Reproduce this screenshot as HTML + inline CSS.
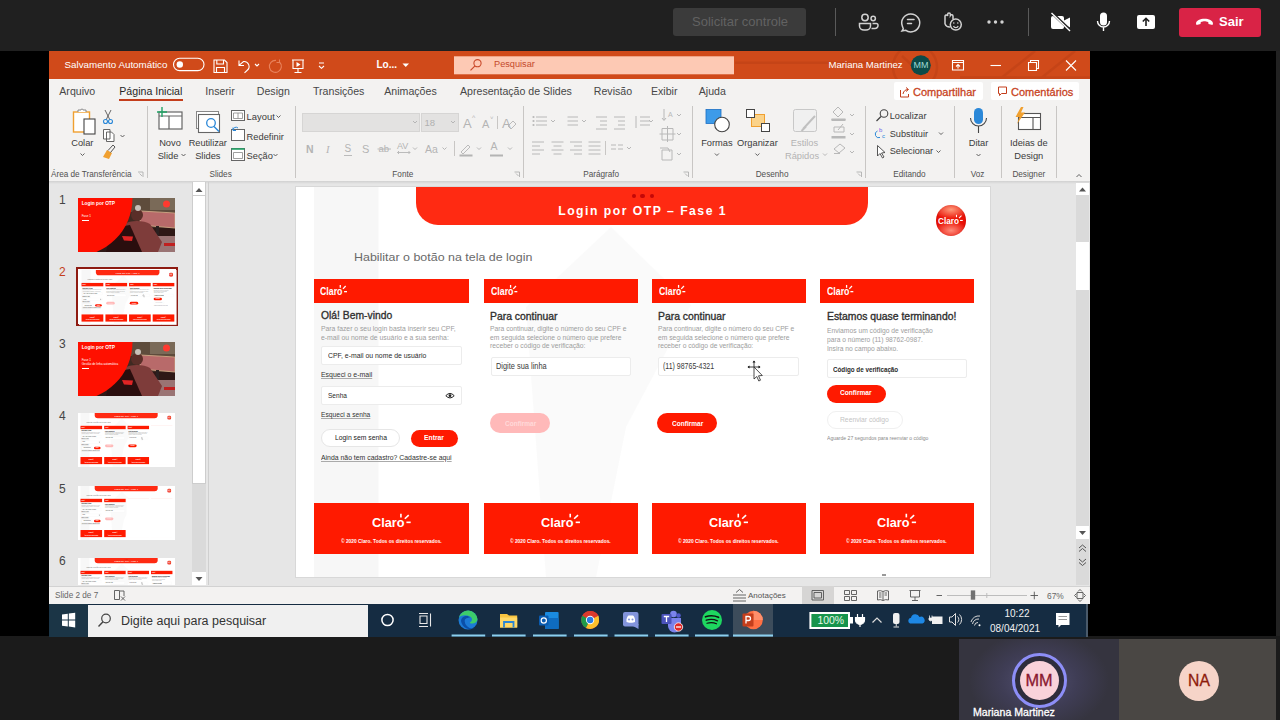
<!DOCTYPE html>
<html><head><meta charset="utf-8">
<style>
*{box-sizing:border-box;margin:0;padding:0}
html,body{width:1280px;height:720px;overflow:hidden;background:#1f1f1f;font-family:"Liberation Sans",sans-serif;position:relative}
.a{position:absolute}
.t{position:absolute;white-space:nowrap;line-height:1}
svg{position:absolute;overflow:visible}
</style></head><body>
<!-- TEAMS TOP BAR -->
<div class="a" style="left:0;top:0;width:1280px;height:51px;background:#202020"></div>
<div class="a" style="left:673px;top:8px;width:133px;height:28px;background:#3b3b3b;border-radius:3px"></div>
<div class="t" style="left:692px;top:15px;font-size:13px;color:#626262">Solicitar controle</div>
<div class="a" style="left:835px;top:8px;width:1px;height:28px;background:#5a5a5a"></div>
<div class="a" style="left:1028px;top:8px;width:1px;height:28px;background:#5a5a5a"></div>
<div class="a" style="left:1179px;top:8px;width:82px;height:29px;background:#d92346;border-radius:3px"></div>
<div class="t" style="left:1219px;top:15px;font-size:13px;font-weight:700;color:#fff">Sair</div>


<svg style="left:0;top:0" width="1280" height="51">
 <g fill="none" stroke="#d2d2d2" stroke-width="1.5">
  <circle cx="865" cy="17.5" r="3.2"/>
  <circle cx="873.2" cy="18.5" r="2.2"/>
  <path d="M859.5 23.5 H870.5 V26 A4.5 4 0 0 1 866 30 H864 A4.5 4 0 0 1 859.5 26 Z"/>
  <path d="M872.5 23.5 H876.5 A1.5 1.5 0 0 1 878 25 V25.5 A3 3 0 0 1 875 28.5 H871.5"/>
  <path d="M903.3 28.8 L902 31 L905.5 30.2 A9 9 0 1 0 902.3 26 Z"/>
  <path d="M907.5 19.5 H914 M907.5 23.5 H911.5" stroke-linecap="round"/>
  <path d="M945 24 V16 A1.4 1.4 0 0 1 947.6 16 V14.5 A1.4 1.4 0 0 1 950.4 14.5 V15.5 A1.4 1.4 0 0 1 953 16 V19.5"/>
  <path d="M945 24 A5 5 0 0 0 950 27"/>
  <circle cx="955.8" cy="24.6" r="5.5"/>
  <path d="M953.5 26 A2.5 2.5 0 0 0 958.2 26" stroke-width="1.2"/>
 </g>
 <g fill="#d2d2d2">
  <circle cx="953.8" cy="23" r="0.8"/><circle cx="957.8" cy="23" r="0.8"/>
  <circle cx="989" cy="22" r="1.7"/><circle cx="995.5" cy="22" r="1.7"/><circle cx="1002" cy="22" r="1.7"/>
 </g>
 <g fill="#fff">
  <rect x="1051" y="16" width="13" height="13" rx="2"/>
  <path d="M1064 20.5 L1070 17.5 V27.5 L1064 24.5 Z"/>
  <rect x="1100" y="12.5" width="7" height="13" rx="3.5"/>
  <rect x="1137" y="15" width="18" height="14" rx="2"/>
 </g>
 <path d="M1051 12 L1071 31" stroke="#202020" stroke-width="3"/>
 <path d="M1051.5 13 L1070 31" stroke="#fff" stroke-width="1.4"/>
 <path d="M1097.5 21 A6 6 0 0 0 1109.5 21 M1103.5 27 V31" stroke="#fff" stroke-width="1.4" fill="none"/>
 <path d="M1146 26 V18.5 M1142.8 21.5 L1146 18.3 L1149.2 21.5" stroke="#202020" stroke-width="1.6" fill="none"/>
 <path d="M1196 23.5 C1196 17 1213 17 1213 23.5 L1212.5 25 L1208.5 24 L1208.2 22 C1205 21 1204 21 1200.8 22 L1200.5 24 L1196.5 25 Z" fill="#fff"/>
</svg>

<!-- BLACK SCREEN AREA -->
<div class="a" style="left:0;top:51px;width:1276px;height:585px;background:#000"></div>
<div class="a" style="left:1276px;top:51px;width:4px;height:585px;background:#222"></div>

<!-- BOTTOM AREA -->
<div class="a" style="left:0;top:636px;width:1280px;height:84px;background:#1b1b1b"></div>

<!-- PPT WINDOW -->
<div class="a" style="left:49px;top:51px;width:1041px;height:28px;background:#d04a1a"></div>
<div class="a" style="left:49px;top:79px;width:1041px;height:102px;background:#f3f2f1"></div>
<div class="a" style="left:49px;top:181px;width:1041px;height:405px;background:#e6e6e6"></div>


<!-- TITLE BAR CONTENT -->
<svg style="left:0;top:0" width="1280" height="80">
 <clipPath id="tbclip"><rect x="49" y="51" width="1041" height="28"/></clipPath>
 <g stroke="#b53d14" stroke-width="2.4" fill="none" opacity="0.4" clip-path="url(#tbclip)">
  <circle cx="915" cy="67" r="22"/>
  <path d="M902 56 L914 67"/>
  <path d="M735 62.7 H890 M1000 79 L1035 51 M1040 79 L1075 51 M960 77.5 H1090"/>
 </g>
 <rect x="173.5" y="58.3" width="30.5" height="12.3" rx="6.15" fill="none" stroke="#fff" stroke-width="1.1"/>
 <circle cx="179.8" cy="64.5" r="3.2" fill="#fff"/>
 <g fill="none" stroke="#fff" stroke-width="1.1">
  <path d="M214 60 H224.5 L227 62.5 V72.5 H214 Z"/>
  <path d="M216.8 60 V64 H223.5 V60 M216.5 72.5 V67.5 H224.5 V72.5"/>
  <path d="M239 60.5 V65.5 H244 M239.3 65.2 L243.5 61.5 A5 5 0 0 1 247 70.5 L244.5 72.8"/>
  <path d="M255 64 L257 66 L259 64"/>
  <path d="M292 60 H304 M293 60.5 V68.5 H303 V60.5 M298 68.5 V72 M294.5 72.5 H301.5"/>
  <path d="M319 63 H324 M319 66 L321.5 68.3 L324 66"/>
 </g>
 <path d="M296.5 62 L300.5 64.5 L296.5 67 Z" fill="#fff"/>
 <path d="M279.5 62 A6 6 0 1 1 276 60.4 M279.5 59.5 V62.5 H276.5" fill="none" stroke="#e8825c" stroke-width="1.1"/>
 <path d="M402.5 63.5 H409 L405.75 67 Z" fill="#fff"/>
 <rect x="454" y="56.3" width="280" height="18" fill="#fdc9b4"/>
 <circle cx="477.5" cy="63.2" r="3.6" fill="none" stroke="#c9492a" stroke-width="1.1"/>
 <path d="M475 65.8 L470.5 70.3" stroke="#c9492a" stroke-width="1.2"/>
 <circle cx="920.8" cy="65.2" r="10" fill="#0c4a48"/>
 <g fill="none" stroke="#fff" stroke-width="1.1">
  <path d="M952.5 60.5 H963.5 V70 H952.5 Z M952.5 62.5 H963.5"/>
  <path d="M958 68.5 V64.5 M956 66.5 L958 64.5 L960 66.5"/>
  <path d="M990.5 65.5 H1001"/>
  <path d="M1028.5 62.5 H1036.5 V70.5 H1028.5 Z M1030.5 62.5 V60.5 H1038.5 V68.5 H1036.5"/>
  <path d="M1066 60.5 L1076 70.5 M1076 60.5 L1066 70.5"/>
 </g>
</svg>
<div class="t" style="left:64.5px;top:60px;font-size:9.8px;color:#fff">Salvamento Automático</div>
<div class="t" style="left:376.5px;top:60px;font-size:10px;font-weight:700;color:#fff">Lo...</div>
<div class="t" style="left:494px;top:60px;font-size:9.2px;color:#c44a2c">Pesquisar</div>
<div class="t" style="left:828.5px;top:60px;font-size:9.6px;color:#fff">Mariana Martinez</div>
<div class="t" style="left:913.5px;top:61px;font-size:9px;color:#9fd9d2">MM</div>


<!-- TABS -->
<div class="t" style="left:59.3px;top:86px;font-size:10.6px;color:#474747">Arquivo</div>
<div class="t" style="left:119.3px;top:86px;font-size:10.6px;color:#262626">Página Inicial</div>
<div class="t" style="left:205.3px;top:86px;font-size:10.6px;color:#474747">Inserir</div>
<div class="t" style="left:256.8px;top:86px;font-size:10.6px;color:#474747">Design</div>
<div class="t" style="left:313px;top:86px;font-size:10.6px;color:#474747">Transições</div>
<div class="t" style="left:384.3px;top:86px;font-size:10.6px;color:#474747">Animações</div>
<div class="t" style="left:460px;top:86px;font-size:10.6px;color:#474747">Apresentação de Slides</div>
<div class="t" style="left:593.8px;top:86px;font-size:10.6px;color:#474747">Revisão</div>
<div class="t" style="left:651px;top:86px;font-size:10.6px;color:#474747">Exibir</div>
<div class="t" style="left:698.8px;top:86px;font-size:10.6px;color:#474747">Ajuda</div>
<div class="a" style="left:119px;top:98.5px;width:64px;height:2.2px;background:#c43e1c"></div>
<div class="a" style="left:894px;top:81.5px;width:89px;height:18.5px;background:#fff;border-radius:2px"></div>
<div class="a" style="left:991px;top:81.5px;width:88px;height:18.5px;background:#fff;border-radius:2px"></div>
<div class="t" style="left:913px;top:87.3px;font-size:11px;color:#c8441f;-webkit-text-stroke:0.3px #c8441f">Compartilhar</div>
<div class="t" style="left:1011px;top:87.3px;font-size:11px;color:#c8441f;-webkit-text-stroke:0.3px #c8441f">Comentários</div>
<svg style="left:0;top:0" width="1280" height="110">
 <g fill="none" stroke="#c43e1c" stroke-width="1">
  <path d="M900.5 90 V97 H908.5 V94 M903 94 C903.5 91 905.5 89.5 908 89.5 M906 87.5 L908.5 89.5 L906 91.5"/>
  <path d="M998.5 87 H1006.5 V93.5 H1001.5 L999.5 95.5 V93.5 H998.5 Z"/>
 </g>
</svg>


<!-- RIBBON -->
<div class="t" style="left:51px;top:171.2px;font-size:8.2px;color:#505050;font-weight:400">Área de Transferência</div>
<div class="t" style="left:120.6px;width:200px;text-align:center;top:171.2px;font-size:8.2px;color:#505050;font-weight:400">Slides</div>
<div class="t" style="left:302.8px;width:200px;text-align:center;top:171.2px;font-size:8.2px;color:#505050;font-weight:400">Fonte</div>
<div class="t" style="left:501.20000000000005px;width:200px;text-align:center;top:171.2px;font-size:8.2px;color:#505050;font-weight:400">Parágrafo</div>
<div class="t" style="left:672.1px;width:200px;text-align:center;top:171.2px;font-size:8.2px;color:#505050;font-weight:400">Desenho</div>
<div class="t" style="left:809.5px;width:200px;text-align:center;top:171.2px;font-size:8.2px;color:#505050;font-weight:400">Editando</div>
<div class="t" style="left:877.5px;width:200px;text-align:center;top:171.2px;font-size:8.2px;color:#505050;font-weight:400">Voz</div>
<div class="t" style="left:928.8px;width:200px;text-align:center;top:171.2px;font-size:8.2px;color:#505050;font-weight:400">Designer</div>
<div class="t" style="left:-17.700000000000003px;width:200px;text-align:center;top:139px;font-size:9.3px;color:#3b3b3b;font-weight:400">Colar</div>
<div class="t" style="left:70px;width:200px;text-align:center;top:139px;font-size:9.3px;color:#3b3b3b;font-weight:400">Novo</div>
<div class="t" style="left:68px;width:200px;text-align:center;top:152.2px;font-size:9.3px;color:#3b3b3b;font-weight:400">Slide</div>
<div class="t" style="left:107.80000000000001px;width:200px;text-align:center;top:139px;font-size:9.2px;color:#3b3b3b;font-weight:400">Reutilizar</div>
<div class="t" style="left:107.80000000000001px;width:200px;text-align:center;top:152.2px;font-size:9.3px;color:#3b3b3b;font-weight:400">Slides</div>
<div class="t" style="left:246.6px;top:112px;font-size:9.4px;color:#3b3b3b;font-weight:400">Layout</div>
<div class="t" style="left:246.6px;top:132.5px;font-size:9.3px;color:#3b3b3b;font-weight:400">Redefinir</div>
<div class="t" style="left:246.6px;top:152px;font-size:9.3px;color:#3b3b3b;font-weight:400">Seção</div>
<div class="t" style="left:616.9px;width:200px;text-align:center;top:139px;font-size:9.3px;color:#3b3b3b;font-weight:400">Formas</div>
<div class="t" style="left:657.4px;width:200px;text-align:center;top:139px;font-size:9.3px;color:#3b3b3b;font-weight:400">Organizar</div>
<div class="t" style="left:704.5px;width:200px;text-align:center;top:139px;font-size:9.3px;color:#b3b3b3;font-weight:400">Estilos</div>
<div class="t" style="left:702px;width:200px;text-align:center;top:152.2px;font-size:9.3px;color:#b3b3b3;font-weight:400">Rápidos</div>
<div class="t" style="left:889.7px;top:111.5px;font-size:9.2px;color:#3b3b3b;font-weight:400">Localizar</div>
<div class="t" style="left:889.7px;top:129.5px;font-size:9.2px;color:#3b3b3b;font-weight:400">Substituir</div>
<div class="t" style="left:889.7px;top:147.2px;font-size:9.2px;color:#3b3b3b;font-weight:400">Selecionar</div>
<div class="t" style="left:878.5px;width:200px;text-align:center;top:139px;font-size:9.3px;color:#3b3b3b;font-weight:400">Ditar</div>
<div class="t" style="left:928.8px;width:200px;text-align:center;top:139px;font-size:9.3px;color:#3b3b3b;font-weight:400">Ideias de</div>
<div class="t" style="left:928.8px;width:200px;text-align:center;top:152.2px;font-size:9.3px;color:#3b3b3b;font-weight:400">Design</div>
<div class="a" style="left:302px;top:113px;width:118px;height:19px;background:#e3e2e1;border:1px solid #d6d5d4"></div>
<div class="a" style="left:421px;top:113px;width:37.5px;height:19px;background:#e3e2e1;border:1px solid #d6d5d4"></div>
<div class="t" style="left:424.5px;top:117.5px;font-size:9.5px;color:#b0b0b0;font-weight:400">18</div>
<svg style="left:0;top:0" width="1280" height="190">
 <g stroke="#c8c6c4" stroke-width="1">
  <path d="M147.5 106 V178 M295.5 106 V178 M523.5 106 V178 M692.5 106 V178 M865.5 106 V178 M954.5 106 V178 M1001.5 106 V178 M1056.5 106 V178"/>
  <path d="M497.5 116 V129 M454.5 141 V156 M605.5 141 V155"/>
 </g>
 <!-- carets -->
 <g fill="none" stroke="#505050" stroke-width="0.9">
  <path d="M80.5 153.5 L82.5 155.5 L84.5 153.5 M120.5 135 L122.5 137 L124.5 135 M181.5 154 L183.5 156 L185.5 154 M276.5 115.5 L278.5 117.5 L280.5 115.5 M273.5 154 L275.5 156 L277.5 154"/>
  <path d="M714.9 153.5 L716.9 155.5 L718.9 153.5 M755.4 153.5 L757.4 155.5 L759.4 153.5 M976.5 154 L978.5 156 L980.5 154 M1076.5 177 L1079 174.5 L1081.5 177"/>
  <path d="M939 132.5 L941 134.5 L943 132.5 M936.5 150.5 L938.5 152.5 L940.5 150.5"/>
 </g>
 <g fill="none" stroke="#b0b0b0" stroke-width="0.9">
  <path d="M413 121 L415 123 L417 121 M451 121 L453 123 L455 121 M413 147.5 L415 149.5 L417 147.5 M442.5 147.5 L444.5 149.5 L446.5 147.5 M477 147.5 L479 149.5 L481 147.5 M508 147.5 L510 149.5 L512 147.5"/>
  <path d="M551 120 L553 122 L555 120 M582 120 L584 122 L586 120 M649 120 L651 122 L653 120 M627 147 L629 149 L631 147 M677 114 L679 116 L681 114 M677 133 L679 135 L681 133 M677 153 L679 155 L681 153"/>
  <path d="M823 153.5 L825 155.5 L827 153.5 M850 114 L852 116 L854 114 M850 133 L852 135 L854 133 M850 151 L852 153 L854 151"/>
  <path d="M138 172 H143 V177 M139.5 173.5 L142 176 M514.5 172 H519.5 V177 M516 173.5 L518.5 176 M683.5 172 H688.5 V177 M685 173.5 L687.5 176 M856.5 172 H861.5 V177 M858 173.5 L860.5 176"/>
 </g>
 <!-- Colar clipboard -->
 <rect x="73.5" y="112" width="16" height="20" fill="#fff" stroke="#f0a030" stroke-width="1.4"/>
 <path d="M78 112 V110 H81 A1 1 0 0 1 83 110 H86 V112" fill="#fff" stroke="#888" stroke-width="1"/>
 <rect x="84" y="119" width="11" height="15" fill="#fff" stroke="#444" stroke-width="1.1"/>
 <!-- scissors -->
 <g fill="none" stroke="#555" stroke-width="0.9"><path d="M105 110 L110 120 M111 110 L106 120"/></g>
 <circle cx="105.5" cy="121.5" r="2" fill="none" stroke="#2b88d8" stroke-width="1.1"/>
 <circle cx="110.5" cy="121.5" r="2" fill="none" stroke="#2b88d8" stroke-width="1.1"/>
 <!-- copy -->
 <path d="M103.5 129.5 H110 V139 H103.5 Z M106.5 132 H111.5 L114 134.5 V141.5 H106.5 Z" fill="#fff" stroke="#555" stroke-width="0.9"/>
 <!-- format painter -->
 <path d="M103 157 L107 150 L112 153 L109 159 Z" fill="#f0a030"/>
 <path d="M108 150.5 L113 145 L115 147 L110.5 152.5" fill="none" stroke="#555" stroke-width="1"/>
 <!-- Novo slide -->
 <rect x="159" y="112" width="23" height="17" fill="#fff" stroke="#666" stroke-width="1.2"/>
 <path d="M159 116 H182 M169 116 V129" stroke="#666" stroke-width="1.2"/>
 <path d="M162 107 V117 M157 112 H167" stroke="#21a366" stroke-width="1.4"/>
 <!-- Reutilizar -->
 <rect x="196.5" y="111.5" width="22" height="17" fill="#fff" stroke="#888" stroke-width="1"/>
 <rect x="198.5" y="114.5" width="21" height="18" fill="#fff" stroke="#666" stroke-width="1.1"/>
 <circle cx="211" cy="123" r="4.3" fill="#fff" stroke="#2b88d8" stroke-width="1.3"/>
 <path d="M214 126.5 L219 131.5" stroke="#2b88d8" stroke-width="1.4"/>
 <!-- Layout/Redefinir/Secao -->
 <rect x="231.5" y="110.5" width="13" height="10" fill="#fff" stroke="#666" stroke-width="1"/>
 <path d="M233.5 113 H242.5 V118.5 H233.5 Z M238 113 V118.5" fill="none" stroke="#888" stroke-width="0.8"/>
 <rect x="231.5" y="129.5" width="13" height="11" fill="#fff" stroke="#666" stroke-width="1"/>
 <path d="M233 130 A3 3 0 0 1 238 128 M233 127.5 V130.5 H236" fill="none" stroke="#2b88d8" stroke-width="1"/>
 <rect x="231.5" y="148.5" width="13" height="12" fill="#fff" stroke="#666" stroke-width="1"/>
 <path d="M231.5 149 H244.5" stroke="#21a366" stroke-width="1.6"/>
 <path d="M233.5 152.5 H242.5 V158.5 H233.5 Z" fill="none" stroke="#888" stroke-width="0.8"/>
 <!-- Fonte row -->
 <g fill="#b4b4b4" font-family="Liberation Sans" >
  <text x="463" y="128" font-size="13">A</text><text x="472" y="120" font-size="7">^</text>
  <text x="482" y="128" font-size="11">A</text><text x="490" y="120" font-size="6">˅</text>
  <text x="502" y="128" font-size="13">A</text>
  <text x="306" y="153" font-size="10.5" font-weight="700">N</text>
  <text x="326" y="153" font-size="10.5" font-style="italic" font-family="Liberation Serif">I</text>
  <text x="344.5" y="152" font-size="10">S</text>
  <text x="362" y="153" font-size="11">S</text>
  <text x="378.5" y="152" font-size="9.5">ab</text>
  <text x="397" y="149" font-size="9">AV</text>
  <text x="425" y="153" font-size="10.5">Aa</text>
  <text x="490.5" y="150" font-size="10.5">A</text>
 </g>
 <g fill="none" stroke="#b4b4b4" stroke-width="0.9">
  <path d="M344 155.5 H352 M377.5 149 H391 M397.5 152.5 H410 M399 151 L397.5 152.5 L399 154 M408.5 151 L410 152.5 L408.5 154"/>
  <path d="M508 126 L513 121 L516 124 L511 129 Z"/>
  <path d="M461 152 L468 145 L470 147 L463 154 Z"/>
 </g>
 <rect x="459.5" y="154.5" width="13" height="2" fill="#b4b4b4"/>
 <rect x="490" y="154.5" width="13" height="2" fill="#b4b4b4"/>
 <!-- paragraph -->
 <g fill="none" stroke="#b8b8b8" stroke-width="1">
  <path d="M536 117 H547 M536 121 H547 M536 125 H547 M567.5 117 H578 M567.5 121 H578 M567.5 125 H578"/>
  <path d="M596 117 H607 M600 121 H607 M600 125 H607 M596 129 H607 M614 117 H625 M618 121 H625 M618 125 H625 M614 129 H625"/>
  <path d="M640 117 H650 M640 121 H650 M640 125 H650 M636 116 V128"/>
  <path d="M532 142 H544 M532 146 H540 M532 150 H544 M532 154 H540"/>
  <path d="M551.5 142 H563.5 M553.5 146 H561.5 M551.5 150 H563.5 M553.5 154 H561.5"/>
  <path d="M570 142 H582 M574 146 H582 M570 150 H582 M574 154 H582"/>
  <path d="M588.5 142 H600.5 M588.5 146 H600.5 M588.5 150 H600.5 M588.5 154 H600.5"/>
  <path d="M611 145 H616 M618 145 H623 M611 149 H616 M618 149 H623"/>
  <path d="M664 109 V120 M662 118 L664 120.5 L666 118 M662 128.5 H673 V140 H662 Z M667.5 126 V142 M659.5 134 H675.5"/>
  <path d="M662 150 H672 V160 H662 Z M660 148 H668 L670 152"/>
 </g>
 <g fill="#b8b8b8"><circle cx="533.5" cy="117" r="1.1"/><circle cx="533.5" cy="121" r="1.1"/><circle cx="533.5" cy="125" r="1.1"/></g>
 <text x="668" y="117" font-size="7" fill="#b8b8b8" font-family="Liberation Sans">A</text>
 <!-- Formas -->
 <rect x="706" y="109.5" width="15" height="14" fill="#3d9be9" stroke="#1b6fc4" stroke-width="0.8"/>
 <circle cx="722" cy="124.5" r="7.3" fill="#fff" stroke="#444" stroke-width="1.1"/>
 <!-- Organizar -->
 <rect x="751.5" y="114.5" width="13" height="12" fill="#fbd38a" stroke="#f0a030" stroke-width="1"/>
 <rect x="746.5" y="109.5" width="8" height="8" fill="#fff" stroke="#444" stroke-width="1"/>
 <rect x="761.5" y="123.5" width="8" height="8" fill="#fff" stroke="#444" stroke-width="1"/>
 <!-- Estilos rapidos -->
 <rect x="793.5" y="109.5" width="23" height="22" rx="2" fill="#f0f0f0" stroke="#c8c8c8" stroke-width="1"/>
 <path d="M803 129 L815 116 M801.5 131 L806 126.5" stroke="#c0c0c0" stroke-width="2"/>
 <!-- right small -->
 <g fill="none" stroke="#b8b8b8" stroke-width="1">
  <path d="M833 112 L838 107 L843 112 L838 117 Z M831.5 119.5 H845.5 M834 127 H844 V132 H834 Z M838 130 L843 124 M834 149 L840 144 L845 148 L839 153 Z M834 153.5 H840"/>
 </g>
 <rect x="831.5" y="118.5" width="14" height="2.5" fill="#b8b8b8"/>
 <rect x="831.5" y="136" width="14" height="2.5" fill="#b8b8b8"/>
 <!-- Editando icons -->
 <circle cx="884" cy="113.5" r="3.8" fill="none" stroke="#444" stroke-width="1.1"/>
 <path d="M881 116.5 L876.5 121" stroke="#444" stroke-width="1.3"/>
 <text x="879" y="132" font-size="6" fill="#7160e8" font-family="Liberation Sans">b</text>
 <text x="882" y="138" font-size="6" fill="#2b88d8" font-family="Liberation Sans">c</text>
 <path d="M877.5 131 A3 3 0 0 0 880 137.5" fill="none" stroke="#2b88d8" stroke-width="1"/>
 <path d="M877.5 145.5 L877.5 156 L880 153.5 L882.5 158 L884 157 L881.5 153 L885 152.5 Z" fill="#fff" stroke="#444" stroke-width="0.9"/>
 <!-- Ditar -->
 <rect x="974" y="108" width="9" height="16" rx="4.5" fill="#2b88d8"/>
 <path d="M970.5 118 A8 8 0 0 0 986.5 118 M978.5 126 V133" fill="none" stroke="#444" stroke-width="1.1"/>
 <!-- Designer -->
 <rect x="1018.5" y="113.5" width="22" height="16" fill="#fff" stroke="#555" stroke-width="1.1"/>
 <path d="M1018.5 117.5 H1040.5 M1033 117.5 V129.5" stroke="#555" stroke-width="1.1"/>
 <path d="M1021 107 L1015.5 117 H1019.5 L1017 124 L1025 112.5 H1021 L1023.5 107 Z" fill="#f0a030"/>
</svg>


<!-- STATUS BAR -->
<div class="a" style="left:49px;top:586px;width:1041px;height:18px;background:#f3f2f1;border-top:1px solid #d2d2d2"></div>
<div class="t" style="left:55px;top:591.5px;font-size:8.2px;color:#666">Slide 2 de 7</div>
<div class="t" style="left:748px;top:591.5px;font-size:8px;color:#555">Anotações</div>
<div class="a" style="left:801.5px;top:586px;width:32px;height:18px;background:#d6d5d4"></div>
<div class="t" style="left:1047px;top:591.5px;font-size:8.4px;color:#666">67%</div>
<svg style="left:0;top:0" width="1280" height="720">
 <g fill="none" stroke="#555" stroke-width="0.9">
  <path d="M114.5 590.5 H119.5 V599.5 H114.5 Z M120 591 H124 V596 M121 596.5 L125 600.5 M125 596.5 L121 600.5"/>
  <path d="M736 592.5 L739.5 589.5 L743 592.5 M733 595 H746 M733 598 H746 M733 601 H746"/>
  <path d="M812 590.5 H823.5 V600 H812 Z M814 592.5 H821.5 V598 H814 Z"/>
  <path d="M844.5 590.5 H849.5 V594.5 H844.5 Z M851.5 590.5 H856.5 V594.5 H851.5 Z M844.5 596.5 H849.5 V600.5 H844.5 Z M851.5 596.5 H856.5 V600.5 H851.5 Z"/>
  <path d="M877.5 591 Q880.5 590 883 591.5 Q885.5 590 888.5 591 V600 Q885.5 599 883 600.5 Q880.5 599 877.5 600 Z M883 591.5 V600.5 M879 593 H881.5 M879 595 H881.5 M879 597 H881.5 M884.5 593 H887 M884.5 595 H887"/>
  <path d="M909.5 590.5 H920.5 M910.5 591 V597 H919.5 V591 M915 597 V600.5 M912 600.5 H918"/>
  <path d="M936.5 595.5 H942"/>
  <path d="M1030.5 595.5 H1038 M1034.3 591.7 V599.3"/>
  <path d="M1080 589.5 L1082 591.5 M1080 589.5 L1078 591.5 M1080 601.5 L1082 599.5 M1080 601.5 L1078 599.5 M1074.5 595.5 L1076.5 593.5 M1074.5 595.5 L1076.5 597.5 M1085.5 595.5 L1083.5 593.5 M1085.5 595.5 L1083.5 597.5 M1077 592.5 H1083 V598.5 H1077 Z"/>
 </g>
 <path d="M947 595.5 H1027" stroke="#bdbdbd" stroke-width="1"/>
 <path d="M986.8 593 V598" stroke="#bdbdbd" stroke-width="1"/>
 <rect x="970.8" y="590.4" width="4.4" height="9.3" fill="#707070"/>
</svg>

<!-- TASKBAR -->
<div class="a" style="left:49px;top:604px;width:1039px;height:32.5px;background:#152c42"></div>
<div class="a" style="left:49px;top:604px;width:39px;height:32.5px;background:#1b3546"></div>
<div class="a" style="left:88px;top:604.8px;width:280px;height:31.8px;background:#f0f0f0"></div>
<div class="t" style="left:121px;top:614.5px;font-size:12.5px;color:#333">Digite aqui para pesquisar</div>
<div class="a" style="left:733px;top:604px;width:40px;height:32.5px;background:#3c4c5b"></div>
<div class="a" style="left:1086px;top:604px;width:1.5px;height:32.5px;background:#4a5a6a"></div>
<div class="t" style="left:1004.5px;top:608.5px;font-size:10px;color:#f2f2f2">10:22</div>
<div class="t" style="left:990px;top:623.5px;font-size:10px;color:#f2f2f2">08/04/2021</div>
<svg style="left:0;top:0" width="1280" height="720">
 <!-- underlines -->
 <g fill="#8ccfee">
  <rect x="451.6" y="634.5" width="33.6" height="2"/><rect x="492" y="634.5" width="33.6" height="2"/><rect x="533" y="634.5" width="33.6" height="2"/>
  <rect x="574" y="634.5" width="33.6" height="2"/><rect x="614.5" y="634.5" width="33.6" height="2"/><rect x="655" y="634.5" width="33.6" height="2"/>
  <rect x="695" y="634.5" width="33.6" height="2"/><rect x="733" y="634.5" width="40" height="2"/>
 </g>
 <!-- windows logo -->
 <path d="M62 614.5 L67.8 613.7 V619.6 H62 Z M68.8 613.5 L75.2 612.8 V619.6 H68.8 Z M62 620.6 H67.8 V626.5 L62 625.7 Z M68.8 620.6 H75.2 V627.4 L68.8 626.6 Z" fill="#fff"/>
 <!-- search -->
 <circle cx="106" cy="618.5" r="4.3" fill="none" stroke="#444" stroke-width="1.2"/>
 <path d="M103 621.8 L98.5 626.5" stroke="#444" stroke-width="1.4"/>
 <!-- cortana -->
 <circle cx="387.5" cy="620" r="5.6" fill="none" stroke="#fff" stroke-width="1.5"/>
 <!-- task view -->
 <g fill="none" stroke="#e8e8e8" stroke-width="1.1"><path d="M419 613.5 H428 M420 616 H427 V623.5 H420 Z M419 626.5 H428 M430.5 613.5 V626.5"/></g>
 <!-- edge -->
 <circle cx="468" cy="620" r="9.5" fill="#1c7ad6"/>
 <path d="M458.8 618 A9.5 9.5 0 0 1 477.5 619 C477 624 471 624.5 469 622.5 C472 622 473.5 618.5 470 616.5 C465 614 459.5 616 458.8 618 Z" fill="#3dcc6a"/>
 <path d="M461 621 C461 616 468 614.5 470 617.5 C466 617 463.5 621 466 625 C468.5 628.5 472.5 629 475 628 A9.5 9.5 0 0 1 461 621 Z" fill="#0b4fa8"/>
 <circle cx="467.5" cy="621" r="2.8" fill="#1c7ad6"/>
 <!-- explorer -->
 <path d="M500 614 H507 L509 615.5 H517.2 V627.5 H500 Z" fill="#f8c440"/>
 <rect x="500" y="617.5" width="17.2" height="10" fill="#ffd866"/>
 <path d="M504 627.5 V622 H513.5 V627.5" fill="none" stroke="#2a86d6" stroke-width="1.8"/>
 <!-- outlook -->
 <rect x="545" y="612" width="13.6" height="17" rx="1" fill="#1a8be0"/>
 <path d="M545 618 L558.6 618 V629 H545 Z" fill="#0f6cc0"/>
 <rect x="539" y="615.5" width="9.5" height="10" rx="1" fill="#0a5bb0"/>
 <circle cx="543.8" cy="620.5" r="2.6" fill="none" stroke="#fff" stroke-width="1.2"/>
 <!-- chrome -->
 <circle cx="590.1" cy="620" r="9" fill="#db3a2c"/>
 <path d="M590.1 620 L582.3 615.5 A9 9 0 0 0 586 628 Z" fill="#1f9a4a"/>
 <path d="M590.1 620 L586 628 A9 9 0 0 0 599 619 L598.5 615.5 Z" fill="#fbc02d"/>
 <path d="M590.1 611 A9 9 0 0 0 582.3 615.5 L590.1 620 L598.4 615.5 A9 9 0 0 0 590.1 611 Z" fill="#db3a2c"/>
 <circle cx="590.1" cy="620" r="4.2" fill="#fff"/>
 <circle cx="590.1" cy="620" r="3.2" fill="#2a7de1"/>
 <!-- discord -->
 <rect x="623" y="612" width="15.5" height="14.5" rx="2" fill="#8294dc"/>
 <path d="M633 626 L638.5 629 V624 Z" fill="#8294dc"/>
 <path d="M626.5 622 C626 618.5 627.5 616 628.5 615.5 H633 C634 616 635.5 618.5 635 622 C633.5 623 628 623 626.5 622 Z" fill="#fff"/>
 <circle cx="629" cy="619.5" r="1" fill="#8294dc"/><circle cx="632.5" cy="619.5" r="1" fill="#8294dc"/>
 <!-- teams -->
 <circle cx="673.5" cy="614" r="3.3" fill="#7b83eb"/>
 <circle cx="678.5" cy="615.5" r="2.3" fill="#5059c9"/>
 <path d="M668 618 H681 V626 A5 5 0 0 1 668 626 Z" fill="#7b83eb"/>
 <rect x="661.5" y="614" width="10" height="10" rx="1" fill="#4b53bc"/>
 <path d="M663.8 616.5 H669.2 M666.5 616.5 V622" stroke="#fff" stroke-width="1.3"/>
 <circle cx="678.5" cy="627" r="4.2" fill="#e02a2a" stroke="#fff" stroke-width="0.8"/>
 <path d="M676 627 H681" stroke="#fff" stroke-width="1.3"/>
 <!-- spotify -->
 <circle cx="712" cy="620" r="10" fill="#1ed760"/>
 <g fill="none" stroke="#111" stroke-linecap="round"><path d="M705.5 616.8 Q712 614.5 718.5 617.3" stroke-width="1.7"/><path d="M706.3 620.2 Q712 618.3 717.5 620.8" stroke-width="1.4"/><path d="M707 623.3 Q712 621.8 716.5 623.8" stroke-width="1.2"/></g>
 <!-- powerpoint -->
 <circle cx="753.5" cy="620" r="9.3" fill="#ff7043"/>
 <path d="M753.5 610.7 A9.3 9.3 0 0 1 762.8 620 H753.5 Z" fill="#ff8f6b"/>
 <rect x="742.5" y="613.5" width="11" height="13" rx="1" fill="#c43e1c"/>
 <path d="M746 623.5 V616.5 H748.5 A2 2 0 0 1 748.5 620.5 H746" fill="none" stroke="#fff" stroke-width="1.3"/>
 <!-- battery -->
 <rect x="810.4" y="613" width="38.6" height="15" fill="#17944c" stroke="#fff" stroke-width="2"/>
 <rect x="850" y="617" width="3" height="6.5" fill="#fff"/>
 <!-- plug -->
 <path d="M857.5 614 V617.5 M862.5 614 V617.5 M855.5 617.5 H864.5 V620 A4.5 4.5 0 0 1 855.5 620 Z M860 624 V627" fill="#fff" stroke="#fff" stroke-width="1.2"/>
 <!-- caret -->
 <path d="M872.5 622.5 L877 618 L881.5 622.5" fill="none" stroke="#ddd" stroke-width="1.2"/>
 <!-- device -->
 <rect x="893" y="613" width="6.5" height="11" rx="2" fill="#f0f0f0"/>
 <path d="M896.25 624 V626.5 M893.5 627 H899" stroke="#ddd" stroke-width="1"/>
 <!-- onedrive -->
 <path d="M910 623.5 A3 3 0 0 1 911 617.8 A4.5 4.5 0 0 1 919.5 617 A3.3 3.3 0 0 1 922.5 623.5 Z" fill="#1e88e5"/>
 <!-- battery plug -->
 <rect x="932" y="616.5" width="10.5" height="7.5" fill="#f0f0f0"/>
 <path d="M929.5 615.5 V618 M932 615.5 V618 M929 618 H932.5 V620 L930.8 621 L929 620 Z" fill="#f0f0f0" stroke="#f0f0f0" stroke-width="0.8"/>
 <!-- speaker -->
 <g fill="none" stroke="#e0e0e0" stroke-width="1"><path d="M949.5 617 H952 L955.5 613.5 V625.5 L952 622 H949.5 Z M957.5 616.5 A4 4 0 0 1 957.5 622.5 M959.5 614.5 A7 7 0 0 1 959.5 624.5"/></g>
 <!-- wifi -->
 <g fill="none" stroke="#d8d8d8" stroke-width="1"><path d="M971 622 A8 8 0 0 1 980 616 M972.5 624 A6 6 0 0 1 979 619 M974.5 625.5 A3.5 3.5 0 0 1 978 622.5"/></g>
 <circle cx="979.5" cy="625.3" r="1" fill="#fff"/>
 <!-- notification -->
 <path d="M1056 613 H1069.5 V625 H1061 L1058.5 627.5 V625 H1056 Z" fill="#fff"/>
 <path d="M1058.5 616.5 H1067 M1058.5 619.5 H1067" stroke="#999" stroke-width="1"/>
</svg>
<div class="t" style="left:817.5px;top:615.5px;font-size:10.4px;color:#e8f8e8">100%</div>

<!-- PARTICIPANTS -->
<div class="a" style="left:959px;top:639px;width:160px;height:81px;background:radial-gradient(ellipse 70px 50px at 80px 42px,#525073 0%,#3f3d55 55%,#35343f 100%)"></div>
<div class="a" style="left:1119px;top:639px;width:157px;height:81px;background:#4a4744"></div>
<div class="a" style="left:1011.5px;top:653.1px;width:55px;height:55px;border-radius:50%;border:3px solid #8d8ef7;background:#2e2d3c"></div>
<div class="a" style="left:1019.5px;top:661.1px;width:39px;height:39px;border-radius:50%;background:#f9d2da;color:#8a1830;font-size:16.3px;text-align:center;line-height:39px;-webkit-text-stroke:0.3px #8a1830">MM</div>
<div class="a" style="left:1179px;top:660.6px;width:40px;height:40px;border-radius:50%;background:#f6d4c8;color:#8e1b0b;font-size:15.7px;text-align:center;line-height:40px;-webkit-text-stroke:0.3px #8e1b0b">NA</div>
<div class="t" style="left:973px;top:706.5px;font-size:10.6px;color:#fff;-webkit-text-stroke:0.3px #fff">Mariana Martinez</div>

<div class="a" style="left:49px;top:181px;width:1041px;height:3px;background:linear-gradient(#d0d0d0,#e6e6e6)"></div>
<div class="a" style="left:208px;top:182px;width:1px;height:403px;background:#cfcfcf"></div>
<div class="a" style="left:192px;top:182px;width:14px;height:302px;background:#fff;border:1px solid #cdcdcd;border-top:none"></div>
<div class="a" style="left:192px;top:195px;width:14px;height:1px;background:#cdcdcd"></div>
<div class="a" style="left:192px;top:484px;width:14px;height:88px;background:#dadada"></div>
<div class="a" style="left:192px;top:572px;width:14px;height:13px;background:#fff"></div>
<div class="a" style="left:1076px;top:182px;width:13px;height:403px;background:#dadada"></div>
<div class="a" style="left:1076px;top:183px;width:13px;height:12px;background:#fff"></div>
<div class="a" style="left:1076px;top:242px;width:13px;height:48px;background:#fff"></div>
<div class="a" style="left:1076px;top:526px;width:13px;height:13px;background:#fff"></div>
<svg style="left:0;top:0" width="1280" height="720">
 <path d="M195.5 192 L199 188 L202.5 192 Z M195.5 577 L199 581 L202.5 577 Z M1079 191.5 L1082.5 187.5 L1086 191.5 Z M1079 531 L1082.5 535 L1086 531 Z" fill="#555"/>
 <path d="M1079 548 L1082.5 545 L1086 548 M1079 551.5 L1082.5 548.5 L1086 551.5 M1079 559 L1082.5 562 L1086 559 M1079 562.5 L1082.5 565.5 L1086 562.5" fill="none" stroke="#555" stroke-width="1"/>
</svg>
<div class="t" style="left:59px;top:194px;font-size:12px;color:#444">1</div>
<div class="t" style="left:59px;top:266px;font-size:12px;color:#c43e1c">2</div>
<div class="t" style="left:59px;top:338px;font-size:12px;color:#444">3</div>
<div class="t" style="left:59px;top:410px;font-size:12px;color:#444">4</div>
<div class="t" style="left:59px;top:483px;font-size:12px;color:#444">5</div>
<div class="t" style="left:59px;top:555px;font-size:12px;color:#444">6</div>
<div class="a" style="left:295px;top:186px;width:696px;height:392px;background:#d8d8d8"></div>
<div class="a" style="left:296px;top:187px;width:694px;height:390px;background:#fff;overflow:hidden">
<svg style="left:0;top:0" width="694" height="390"><g fill="#f5f5f5"><path d="M18 0 H82.5 V390 H18 Z" opacity="0.8"/><path d="M315 40 L395 118 L330 240 L300 390 L250 390 L230 120 Z" opacity="0.5"/></g></svg>
<div class="a" style="left:120.40px;top:0.00px;width:451.60px;height:37.50px;background:#ff2a12;border-radius:0 0 22px 22px"></div>
<div class="a" style="left:335.70px;top:6.70px;width:4.40px;height:4.40px;background:#c40808;border-radius:50%"></div>
<div class="a" style="left:344.40px;top:6.70px;width:4.40px;height:4.40px;background:#c40808;border-radius:50%"></div>
<div class="a" style="left:353.50px;top:6.70px;width:4.40px;height:4.40px;background:#c40808;border-radius:50%"></div>
<div class="t" style="left:262.20px;top:18.17px;font-size:12.209px;color:#fff;font-weight:700;letter-spacing:1.5px">Login por OTP – Fase 1</div>
<div class="a" style="left:640.00px;top:18.00px;width:30.20px;height:30.60px;border-radius:50%;background:radial-gradient(ellipse 60% 30% at 50% 15%, #ff9a7a 0%, rgba(255,80,50,0) 100%),radial-gradient(ellipse 55% 30% at 50% 82%, #ff8c7a 0%, rgba(255,60,40,0) 100%),radial-gradient(circle at 50% 50%, #f01808 0%, #e81006 60%, #c00600 90%, #a00 100%)"></div>
<div class="t" style="left:641.80px;top:29.63px;font-size:8.642px;color:#fff;font-weight:700;transform:scaleX(0.9506);transform-origin:0 0;">Claro</div>
<svg style="left:0;top:0" width="1" height="1"><g stroke="#fff" stroke-width="1.07" stroke-linecap="butt"><path d="M660.49 27.81 V30.20"/><path d="M663.01 31.08 L665.53 28.69"/><path d="M664.02 33.44 H666.79"/></g></svg>
<div class="t" style="left:57.60px;top:64.31px;font-size:11.797px;color:#6a6a6a;font-weight:400;transform:scaleX(1.0555);transform-origin:0 0;">Habilitar o botão na tela de login</div>
<div class="a" style="left:17.70px;top:91.70px;width:155.50px;height:24.80px;background:#ff1a00"></div>
<div class="t" style="left:24.25px;top:100.06px;font-size:10.288px;color:#fff;font-weight:700;transform:scaleX(0.8556);transform-origin:0 0;">Claro</div>
<svg style="left:0;top:0" width="1" height="1"><g stroke="#fff" stroke-width="1.28" stroke-linecap="butt"><path d="M44.27 97.95 V100.80"/><path d="M46.98 101.85 L49.67 99.00"/><path d="M48.05 104.66 H51.02"/></g></svg>
<div class="a" style="left:17.70px;top:315.80px;width:155.50px;height:50.90px;background:#ff1a00"></div>
<div class="t" style="left:76.00px;top:329.37px;font-size:13.169px;color:#fff;font-weight:700;transform:scaleX(0.9655);transform-origin:0 0;">Claro</div>
<svg style="left:0;top:0" width="1" height="1"><g stroke="#fff" stroke-width="1.63" stroke-linecap="butt"><path d="M104.92 326.75 V330.40"/><path d="M108.83 331.74 L112.72 328.10"/><path d="M110.39 335.34 H114.67"/></g></svg>
<div class="t" style="left:44.95px;top:352.50px;font-size:4.938px;color:#fff;font-weight:700;transform:scaleX(0.9842);transform-origin:0 0;">© 2020 Claro. Todos os direitos reservados.</div>
<div class="a" style="left:188.00px;top:91.70px;width:153.50px;height:24.80px;background:#ff1a00"></div>
<div class="t" style="left:194.55px;top:100.06px;font-size:10.288px;color:#fff;font-weight:700;transform:scaleX(0.8556);transform-origin:0 0;">Claro</div>
<svg style="left:0;top:0" width="1" height="1"><g stroke="#fff" stroke-width="1.28" stroke-linecap="butt"><path d="M214.58 97.95 V100.80"/><path d="M217.28 101.85 L219.98 99.00"/><path d="M218.36 104.66 H221.33"/></g></svg>
<div class="a" style="left:188.00px;top:315.80px;width:153.50px;height:50.90px;background:#ff1a00"></div>
<div class="t" style="left:245.30px;top:329.37px;font-size:13.169px;color:#fff;font-weight:700;transform:scaleX(0.9655);transform-origin:0 0;">Claro</div>
<svg style="left:0;top:0" width="1" height="1"><g stroke="#fff" stroke-width="1.63" stroke-linecap="butt"><path d="M274.22 326.75 V330.40"/><path d="M278.12 331.74 L282.02 328.10"/><path d="M279.68 335.34 H283.97"/></g></svg>
<div class="t" style="left:214.25px;top:352.50px;font-size:4.938px;color:#fff;font-weight:700;transform:scaleX(0.9842);transform-origin:0 0;">© 2020 Claro. Todos os direitos reservados.</div>
<div class="a" style="left:356.00px;top:91.70px;width:153.60px;height:24.80px;background:#ff1a00"></div>
<div class="t" style="left:362.55px;top:100.06px;font-size:10.288px;color:#fff;font-weight:700;transform:scaleX(0.8556);transform-origin:0 0;">Claro</div>
<svg style="left:0;top:0" width="1" height="1"><g stroke="#fff" stroke-width="1.28" stroke-linecap="butt"><path d="M382.57 97.95 V100.80"/><path d="M385.27 101.85 L387.97 99.00"/><path d="M386.35 104.66 H389.32"/></g></svg>
<div class="a" style="left:356.00px;top:315.80px;width:153.60px;height:50.90px;background:#ff1a00"></div>
<div class="t" style="left:413.35px;top:329.37px;font-size:13.169px;color:#fff;font-weight:700;transform:scaleX(0.9655);transform-origin:0 0;">Claro</div>
<svg style="left:0;top:0" width="1" height="1"><g stroke="#fff" stroke-width="1.63" stroke-linecap="butt"><path d="M442.27 326.75 V330.40"/><path d="M446.17 331.74 L450.07 328.10"/><path d="M447.73 335.34 H452.02"/></g></svg>
<div class="t" style="left:382.30px;top:352.50px;font-size:4.938px;color:#fff;font-weight:700;transform:scaleX(0.9842);transform-origin:0 0;">© 2020 Claro. Todos os direitos reservados.</div>
<div class="a" style="left:524.00px;top:91.70px;width:153.70px;height:24.80px;background:#ff1a00"></div>
<div class="t" style="left:530.55px;top:100.06px;font-size:10.288px;color:#fff;font-weight:700;transform:scaleX(0.8556);transform-origin:0 0;">Claro</div>
<svg style="left:0;top:0" width="1" height="1"><g stroke="#fff" stroke-width="1.28" stroke-linecap="butt"><path d="M550.57 97.95 V100.80"/><path d="M553.27 101.85 L555.97 99.00"/><path d="M554.35 104.66 H557.32"/></g></svg>
<div class="a" style="left:524.00px;top:315.80px;width:153.70px;height:50.90px;background:#ff1a00"></div>
<div class="t" style="left:581.40px;top:329.37px;font-size:13.169px;color:#fff;font-weight:700;transform:scaleX(0.9655);transform-origin:0 0;">Claro</div>
<svg style="left:0;top:0" width="1" height="1"><g stroke="#fff" stroke-width="1.63" stroke-linecap="butt"><path d="M610.32 326.75 V330.40"/><path d="M614.23 331.74 L618.12 328.10"/><path d="M615.78 335.34 H620.07"/></g></svg>
<div class="t" style="left:550.35px;top:352.50px;font-size:4.938px;color:#fff;font-weight:700;transform:scaleX(0.9842);transform-origin:0 0;">© 2020 Claro. Todos os direitos reservados.</div>
<div class="t" style="left:24.70px;top:123.32px;font-size:10.700px;color:#2e2e2e;font-weight:400;transform:scaleX(0.9669);transform-origin:0 0;-webkit-text-stroke:0.32px #2e2e2e;">Olá! Bem-vindo</div>
<div class="t" style="left:24.70px;top:138.83px;font-size:6.584px;color:#9d9d9d;font-weight:400;transform:scaleX(1.0346);transform-origin:0 0;">Para fazer o seu login basta inserir seu CPF,</div>
<div class="t" style="left:24.70px;top:147.53px;font-size:6.584px;color:#9d9d9d;font-weight:400;transform:scaleX(1.04);transform-origin:0 0;">e-mail ou nome de usuário e a sua senha:</div>
<div class="a" style="left:24.50px;top:159.40px;width:141.20px;height:18.80px;background:#fff;border:1px solid #ececec;border-radius:2px"></div>
<div class="t" style="left:31.70px;top:166.36px;font-size:6.859px;color:#2a2a2a;font-weight:400;transform:scaleX(1.0054);transform-origin:0 0;">CPF, e-mail ou nome de usuário</div>
<div class="t" style="left:24.70px;top:185.25px;font-size:6.447px;color:#333;font-weight:400;transform:scaleX(1.0764);transform-origin:0 0;text-decoration:underline;text-decoration-color:#aaa;text-underline-offset:1px">Esqueci o e-mail</div>
<div class="a" style="left:24.50px;top:199.30px;width:141.20px;height:18.90px;background:#fff;border:1px solid #ececec;border-radius:2px"></div>
<div class="t" style="left:31.70px;top:206.01px;font-size:6.859px;color:#2a2a2a;font-weight:400;transform:scaleX(0.9580);transform-origin:0 0;">Senha</div>
<svg style="left:0;top:0" width="1" height="1"><path d="M149.8 208.7 Q154.0 204.2 158.2 208.7 Q154.0 213.2 149.8 208.7 Z" fill="none" stroke="#222" stroke-width="1"/><circle cx="154.0" cy="208.7" r="1.4" fill="#222"/></svg>
<div class="t" style="left:24.70px;top:224.95px;font-size:6.447px;color:#333;font-weight:400;transform:scaleX(1.0363);transform-origin:0 0;text-decoration:underline;text-decoration-color:#aaa;text-underline-offset:1px">Esqueci a senha</div>
<div class="a" style="left:24.50px;top:242.30px;width:79.90px;height:18.10px;background:#fff;border:1px solid #e6e6e6;border-radius:10px"></div>
<div class="t" style="left:38.75px;top:248.15px;font-size:6.447px;color:#222;font-weight:400;transform:scaleX(1.0590);transform-origin:0 0;">Login sem senha</div>
<div class="a" style="left:115.20px;top:242.50px;width:47.00px;height:17.90px;background:#ff1a00;border-radius:10px"></div>
<div class="t" style="left:128.40px;top:248.15px;font-size:6.447px;color:#fff;font-weight:700;transform:scaleX(1.0532);transform-origin:0 0;">Entrar</div>
<div class="t" style="left:24.70px;top:267.82px;font-size:6.722px;color:#333;font-weight:400;transform:scaleX(1.0228);transform-origin:0 0;text-decoration:underline;text-decoration-color:#aaa;text-underline-offset:1px">Ainda não tem cadastro? Cadastre-se aqui</div>
<div class="t" style="left:194.10px;top:123.63px;font-size:10.562px;color:#2e2e2e;font-weight:400;transform:scaleX(0.9840);transform-origin:0 0;-webkit-text-stroke:0.32px #2e2e2e;">Para continuar</div>
<div class="t" style="left:194.10px;top:138.72px;font-size:6.722px;color:#9d9d9d;font-weight:400;">Para continuar, digite o número do seu CPF e</div>
<div class="t" style="left:194.10px;top:147.52px;font-size:6.722px;color:#9d9d9d;font-weight:400;">em seguida selecione o número que prefere</div>
<div class="t" style="left:194.10px;top:156.12px;font-size:6.722px;color:#9d9d9d;font-weight:400;">receber o código de verificação:</div>
<div class="a" style="left:194.50px;top:170.00px;width:140.00px;height:19.00px;background:#fff;border:1px solid #ececec;border-radius:2px"></div>
<div class="t" style="left:200.30px;top:176.07px;font-size:8.230px;color:#3a3a3a;font-weight:400;transform:scaleX(0.9009);transform-origin:0 0;">Digite sua linha</div>
<div class="a" style="left:193.80px;top:225.60px;width:60.00px;height:20.20px;background:#ffb9b9;border-radius:10px"></div>
<div class="t" style="left:208.50px;top:233.17px;font-size:7.270px;color:#ffdada;font-weight:700;transform:scaleX(0.8996);transform-origin:0 0;">Confirmar</div>
<div class="t" style="left:362.00px;top:123.63px;font-size:10.562px;color:#2e2e2e;font-weight:400;transform:scaleX(0.9840);transform-origin:0 0;-webkit-text-stroke:0.32px #2e2e2e;">Para continuar</div>
<div class="t" style="left:362.00px;top:138.72px;font-size:6.722px;color:#9d9d9d;font-weight:400;">Para continuar, digite o número do seu CPF e</div>
<div class="t" style="left:362.00px;top:147.52px;font-size:6.722px;color:#9d9d9d;font-weight:400;">em seguida selecione o número que prefere</div>
<div class="t" style="left:362.00px;top:156.12px;font-size:6.722px;color:#9d9d9d;font-weight:400;">receber o código de verificação:</div>
<div class="a" style="left:361.50px;top:170.00px;width:141.50px;height:19.00px;background:#fff;border:1px solid #ececec;border-radius:2px"></div>
<div class="t" style="left:367.30px;top:176.07px;font-size:8.230px;color:#3a3a3a;font-weight:400;transform:scaleX(0.8498);transform-origin:0 0;">(11) 98765-4321</div>
<div class="a" style="left:360.80px;top:225.60px;width:60.00px;height:20.20px;background:#ff1a00;border-radius:10px"></div>
<div class="t" style="left:375.50px;top:233.17px;font-size:7.270px;color:#fff;font-weight:700;transform:scaleX(0.8996);transform-origin:0 0;">Confirmar</div>
<div class="t" style="left:530.70px;top:124.59px;font-size:10.014px;color:#2e2e2e;font-weight:400;transform:scaleX(1.0386);transform-origin:0 0;-webkit-text-stroke:0.32px #2e2e2e;">Estamos quase terminando!</div>
<div class="t" style="left:530.70px;top:141.31px;font-size:6.859px;color:#9d9d9d;font-weight:400;transform:scaleX(0.9825);transform-origin:0 0;">Enviamos um código de verificação</div>
<div class="t" style="left:530.70px;top:150.11px;font-size:6.859px;color:#9d9d9d;font-weight:400;transform:scaleX(0.9734);transform-origin:0 0;">para o número (11) 98762-0987.</div>
<div class="t" style="left:530.70px;top:158.51px;font-size:6.859px;color:#9d9d9d;font-weight:400;transform:scaleX(0.9791);transform-origin:0 0;">Insira no campo abaixo.</div>
<div class="a" style="left:530.50px;top:172.10px;width:140.80px;height:19.10px;background:#fff;border:1px solid #ececec;border-radius:2px"></div>
<div class="t" style="left:537.10px;top:178.84px;font-size:7.545px;color:#2a2a2a;font-weight:700;transform:scaleX(0.8329);transform-origin:0 0;">Código de verificação</div>
<div class="a" style="left:530.50px;top:198.30px;width:59.40px;height:18.10px;background:#ff1a00;border-radius:10px"></div>
<div class="t" style="left:544.20px;top:203.38px;font-size:7.133px;color:#fff;font-weight:700;transform:scaleX(0.9271);transform-origin:0 0;">Confirmar</div>
<div class="a" style="left:530.50px;top:223.50px;width:76.40px;height:18.70px;background:#fff;border:1px solid #f0f0f0;border-radius:10px"></div>
<div class="t" style="left:544.20px;top:228.87px;font-size:7.270px;color:#c4c4c4;font-weight:400;transform:scaleX(0.9288);transform-origin:0 0;">Reenviar código</div>
<div class="t" style="left:530.50px;top:249.26px;font-size:5.350px;color:#8a8a8a;font-weight:400;transform:scaleX(0.9480);transform-origin:0 0;">Aguarde 27 segundos para reenviar o código</div>
<svg style="left:0;top:0" width="1" height="1"><g transform="translate(458.0,180.0)"><path d="M-6 0 H6 M0 -6 V0" stroke="#111" stroke-width="0.8"/><path d="M-6.5 0 L-4.5 -1.5 V1.5 Z M6.5 0 L4.5 -1.5 V1.5 Z M0 -6.5 L-1.5 -4.5 H1.5 Z" fill="#111"/><path d="M0 0 V12 L2.8 9.5 L4.8 14 L6.5 13.2 L4.5 8.8 L8.3 8.5 Z" fill="#fff" stroke="#222" stroke-width="0.8"/></g></svg>
<div class="a" style="left:586.00px;top:387.00px;width:4.00px;height:1.50px;background:#999"></div>
</div>
<div class="a" style="left:78.2px;top:197.8px;width:96.7px;height:54px;overflow:hidden;background:#3e2a22"><svg style="left:0;top:0" width="97" height="54"><rect x="0" y="0" width="97" height="14" fill="#5e4c3c"/><rect x="72" y="0" width="25" height="12" fill="#7a6a58"/><rect x="0" y="30" width="97" height="24" fill="#2e1816"/><path d="M62 13 L97 15 V30 L62 27 Z" fill="#b86a6a" stroke="#c8a080" stroke-width="1"/><rect x="78" y="28" width="3" height="12" fill="#2a2020"/><path d="M80 38 H97 V54 H76 Z" fill="#9a7474"/><path d="M86 45 H97 V48 H86 Z" fill="#c02020"/><path d="M46 26 C52 22 66 22 72 26 L84 44 L80 54 H50 Z" fill="#7e3c3a"/><circle cx="59" cy="17" r="6" fill="#5a2e28"/><circle cx="60" cy="10" r="3" fill="#c8c0b8"/><path d="M34 30 L52 27 L64 54 H28 Z" fill="#2a0e0e"/><path d="M44 38 L55 38.5 L54 43 L46 42.5 Z" fill="#e02424"/><circle cx="-4" cy="0" r="58.5" fill="#ff1000"/><circle cx="88.5" cy="6" r="3.5" fill="#ff3a30"/></svg><div class="t" style="left:3.5px;top:4.5px;font-size:4.8px;font-weight:700;color:#fff">Login por OTP</div><div class="t" style="left:3.5px;top:17px;font-size:3px;color:#fff">Fase 1</div><div class="a" style="left:3.5px;top:22px;width:7px;height:1px;background:#fff"></div></div>
<div class="a" style="left:78.2px;top:341.7px;width:96.7px;height:54px;overflow:hidden;background:#3e2a22"><svg style="left:0;top:0" width="97" height="54"><rect x="0" y="0" width="97" height="14" fill="#5e4c3c"/><rect x="72" y="0" width="25" height="12" fill="#7a6a58"/><rect x="0" y="30" width="97" height="24" fill="#2e1816"/><path d="M62 13 L97 15 V30 L62 27 Z" fill="#b86a6a" stroke="#c8a080" stroke-width="1"/><rect x="78" y="28" width="3" height="12" fill="#2a2020"/><path d="M80 38 H97 V54 H76 Z" fill="#9a7474"/><path d="M86 45 H97 V48 H86 Z" fill="#c02020"/><path d="M46 26 C52 22 66 22 72 26 L84 44 L80 54 H50 Z" fill="#7e3c3a"/><circle cx="59" cy="17" r="6" fill="#5a2e28"/><circle cx="60" cy="10" r="3" fill="#c8c0b8"/><path d="M34 30 L52 27 L64 54 H28 Z" fill="#2a0e0e"/><path d="M44 38 L55 38.5 L54 43 L46 42.5 Z" fill="#e02424"/><circle cx="-4" cy="0" r="58.5" fill="#ff1000"/><circle cx="88.5" cy="6" r="3.5" fill="#ff3a30"/></svg><div class="t" style="left:3.5px;top:4.5px;font-size:4.8px;font-weight:700;color:#fff">Login por OTP</div><div class="t" style="left:3.5px;top:17px;font-size:3px;color:#fff">Fase 1</div><div class="t" style="left:3.5px;top:21px;font-size:3px;color:#fff">Gestão de linha automática</div><div class="a" style="left:3.5px;top:26px;width:7px;height:0.8px;background:#fff"></div></div>
<div class="a" style="left:76px;top:267.3px;width:101.6px;height:59px;border:2px solid #8e1b12;background:#fff"></div>
<div class="a" style="left:78.5px;top:269.5px;width:694px;height:390px;background:#fff;overflow:hidden;transform:scale(0.1406);transform-origin:0 0">
<svg style="left:0;top:0" width="694" height="390"><g fill="#f5f5f5"><path d="M18 0 H82.5 V390 H18 Z" opacity="0.8"/><path d="M315 40 L395 118 L330 240 L300 390 L250 390 L230 120 Z" opacity="0.5"/></g></svg>
<div class="a" style="left:120.40px;top:0.00px;width:451.60px;height:37.50px;background:#ff2a12;border-radius:0 0 22px 22px"></div>
<div class="a" style="left:335.70px;top:6.70px;width:4.40px;height:4.40px;background:#c40808;border-radius:50%"></div>
<div class="a" style="left:344.40px;top:6.70px;width:4.40px;height:4.40px;background:#c40808;border-radius:50%"></div>
<div class="a" style="left:353.50px;top:6.70px;width:4.40px;height:4.40px;background:#c40808;border-radius:50%"></div>
<div class="t" style="left:262.20px;top:18.17px;font-size:12.209px;color:#fff;font-weight:700;letter-spacing:1.5px">Login por OTP – Fase 1</div>
<div class="a" style="left:640.00px;top:18.00px;width:30.20px;height:30.60px;border-radius:50%;background:radial-gradient(ellipse 60% 30% at 50% 15%, #ff9a7a 0%, rgba(255,80,50,0) 100%),radial-gradient(ellipse 55% 30% at 50% 82%, #ff8c7a 0%, rgba(255,60,40,0) 100%),radial-gradient(circle at 50% 50%, #f01808 0%, #e81006 60%, #c00600 90%, #a00 100%)"></div>
<div class="t" style="left:641.80px;top:29.63px;font-size:8.642px;color:#fff;font-weight:700;transform:scaleX(0.9506);transform-origin:0 0;">Claro</div>
<svg style="left:0;top:0" width="1" height="1"><g stroke="#fff" stroke-width="1.07" stroke-linecap="butt"><path d="M660.49 27.81 V30.20"/><path d="M663.01 31.08 L665.53 28.69"/><path d="M664.02 33.44 H666.79"/></g></svg>
<div class="t" style="left:57.60px;top:64.31px;font-size:11.797px;color:#6a6a6a;font-weight:400;transform:scaleX(1.0555);transform-origin:0 0;">Habilitar o botão na tela de login</div>
<div class="a" style="left:17.70px;top:91.70px;width:155.50px;height:24.80px;background:#ff1a00"></div>
<div class="t" style="left:24.25px;top:100.06px;font-size:10.288px;color:#fff;font-weight:700;transform:scaleX(0.8556);transform-origin:0 0;">Claro</div>
<svg style="left:0;top:0" width="1" height="1"><g stroke="#fff" stroke-width="1.28" stroke-linecap="butt"><path d="M44.27 97.95 V100.80"/><path d="M46.98 101.85 L49.67 99.00"/><path d="M48.05 104.66 H51.02"/></g></svg>
<div class="a" style="left:17.70px;top:315.80px;width:155.50px;height:50.90px;background:#ff1a00"></div>
<div class="t" style="left:76.00px;top:329.37px;font-size:13.169px;color:#fff;font-weight:700;transform:scaleX(0.9655);transform-origin:0 0;">Claro</div>
<svg style="left:0;top:0" width="1" height="1"><g stroke="#fff" stroke-width="1.63" stroke-linecap="butt"><path d="M104.92 326.75 V330.40"/><path d="M108.83 331.74 L112.72 328.10"/><path d="M110.39 335.34 H114.67"/></g></svg>
<div class="t" style="left:44.95px;top:352.50px;font-size:4.938px;color:#fff;font-weight:700;transform:scaleX(0.9842);transform-origin:0 0;">© 2020 Claro. Todos os direitos reservados.</div>
<div class="a" style="left:188.00px;top:91.70px;width:153.50px;height:24.80px;background:#ff1a00"></div>
<div class="t" style="left:194.55px;top:100.06px;font-size:10.288px;color:#fff;font-weight:700;transform:scaleX(0.8556);transform-origin:0 0;">Claro</div>
<svg style="left:0;top:0" width="1" height="1"><g stroke="#fff" stroke-width="1.28" stroke-linecap="butt"><path d="M214.58 97.95 V100.80"/><path d="M217.28 101.85 L219.98 99.00"/><path d="M218.36 104.66 H221.33"/></g></svg>
<div class="a" style="left:188.00px;top:315.80px;width:153.50px;height:50.90px;background:#ff1a00"></div>
<div class="t" style="left:245.30px;top:329.37px;font-size:13.169px;color:#fff;font-weight:700;transform:scaleX(0.9655);transform-origin:0 0;">Claro</div>
<svg style="left:0;top:0" width="1" height="1"><g stroke="#fff" stroke-width="1.63" stroke-linecap="butt"><path d="M274.22 326.75 V330.40"/><path d="M278.12 331.74 L282.02 328.10"/><path d="M279.68 335.34 H283.97"/></g></svg>
<div class="t" style="left:214.25px;top:352.50px;font-size:4.938px;color:#fff;font-weight:700;transform:scaleX(0.9842);transform-origin:0 0;">© 2020 Claro. Todos os direitos reservados.</div>
<div class="a" style="left:356.00px;top:91.70px;width:153.60px;height:24.80px;background:#ff1a00"></div>
<div class="t" style="left:362.55px;top:100.06px;font-size:10.288px;color:#fff;font-weight:700;transform:scaleX(0.8556);transform-origin:0 0;">Claro</div>
<svg style="left:0;top:0" width="1" height="1"><g stroke="#fff" stroke-width="1.28" stroke-linecap="butt"><path d="M382.57 97.95 V100.80"/><path d="M385.27 101.85 L387.97 99.00"/><path d="M386.35 104.66 H389.32"/></g></svg>
<div class="a" style="left:356.00px;top:315.80px;width:153.60px;height:50.90px;background:#ff1a00"></div>
<div class="t" style="left:413.35px;top:329.37px;font-size:13.169px;color:#fff;font-weight:700;transform:scaleX(0.9655);transform-origin:0 0;">Claro</div>
<svg style="left:0;top:0" width="1" height="1"><g stroke="#fff" stroke-width="1.63" stroke-linecap="butt"><path d="M442.27 326.75 V330.40"/><path d="M446.17 331.74 L450.07 328.10"/><path d="M447.73 335.34 H452.02"/></g></svg>
<div class="t" style="left:382.30px;top:352.50px;font-size:4.938px;color:#fff;font-weight:700;transform:scaleX(0.9842);transform-origin:0 0;">© 2020 Claro. Todos os direitos reservados.</div>
<div class="a" style="left:524.00px;top:91.70px;width:153.70px;height:24.80px;background:#ff1a00"></div>
<div class="t" style="left:530.55px;top:100.06px;font-size:10.288px;color:#fff;font-weight:700;transform:scaleX(0.8556);transform-origin:0 0;">Claro</div>
<svg style="left:0;top:0" width="1" height="1"><g stroke="#fff" stroke-width="1.28" stroke-linecap="butt"><path d="M550.57 97.95 V100.80"/><path d="M553.27 101.85 L555.97 99.00"/><path d="M554.35 104.66 H557.32"/></g></svg>
<div class="a" style="left:524.00px;top:315.80px;width:153.70px;height:50.90px;background:#ff1a00"></div>
<div class="t" style="left:581.40px;top:329.37px;font-size:13.169px;color:#fff;font-weight:700;transform:scaleX(0.9655);transform-origin:0 0;">Claro</div>
<svg style="left:0;top:0" width="1" height="1"><g stroke="#fff" stroke-width="1.63" stroke-linecap="butt"><path d="M610.32 326.75 V330.40"/><path d="M614.23 331.74 L618.12 328.10"/><path d="M615.78 335.34 H620.07"/></g></svg>
<div class="t" style="left:550.35px;top:352.50px;font-size:4.938px;color:#fff;font-weight:700;transform:scaleX(0.9842);transform-origin:0 0;">© 2020 Claro. Todos os direitos reservados.</div>
<div class="t" style="left:24.70px;top:123.32px;font-size:10.700px;color:#2e2e2e;font-weight:400;transform:scaleX(0.9669);transform-origin:0 0;-webkit-text-stroke:0.32px #2e2e2e;">Olá! Bem-vindo</div>
<div class="t" style="left:24.70px;top:138.83px;font-size:6.584px;color:#9d9d9d;font-weight:400;transform:scaleX(1.0346);transform-origin:0 0;">Para fazer o seu login basta inserir seu CPF,</div>
<div class="t" style="left:24.70px;top:147.53px;font-size:6.584px;color:#9d9d9d;font-weight:400;transform:scaleX(1.04);transform-origin:0 0;">e-mail ou nome de usuário e a sua senha:</div>
<div class="a" style="left:24.50px;top:159.40px;width:141.20px;height:18.80px;background:#fff;border:1px solid #ececec;border-radius:2px"></div>
<div class="t" style="left:31.70px;top:166.36px;font-size:6.859px;color:#2a2a2a;font-weight:400;transform:scaleX(1.0054);transform-origin:0 0;">CPF, e-mail ou nome de usuário</div>
<div class="t" style="left:24.70px;top:185.25px;font-size:6.447px;color:#333;font-weight:400;transform:scaleX(1.0764);transform-origin:0 0;text-decoration:underline;text-decoration-color:#aaa;text-underline-offset:1px">Esqueci o e-mail</div>
<div class="a" style="left:24.50px;top:199.30px;width:141.20px;height:18.90px;background:#fff;border:1px solid #ececec;border-radius:2px"></div>
<div class="t" style="left:31.70px;top:206.01px;font-size:6.859px;color:#2a2a2a;font-weight:400;transform:scaleX(0.9580);transform-origin:0 0;">Senha</div>
<svg style="left:0;top:0" width="1" height="1"><path d="M149.8 208.7 Q154.0 204.2 158.2 208.7 Q154.0 213.2 149.8 208.7 Z" fill="none" stroke="#222" stroke-width="1"/><circle cx="154.0" cy="208.7" r="1.4" fill="#222"/></svg>
<div class="t" style="left:24.70px;top:224.95px;font-size:6.447px;color:#333;font-weight:400;transform:scaleX(1.0363);transform-origin:0 0;text-decoration:underline;text-decoration-color:#aaa;text-underline-offset:1px">Esqueci a senha</div>
<div class="a" style="left:24.50px;top:242.30px;width:79.90px;height:18.10px;background:#fff;border:1px solid #e6e6e6;border-radius:10px"></div>
<div class="t" style="left:38.75px;top:248.15px;font-size:6.447px;color:#222;font-weight:400;transform:scaleX(1.0590);transform-origin:0 0;">Login sem senha</div>
<div class="a" style="left:115.20px;top:242.50px;width:47.00px;height:17.90px;background:#ff1a00;border-radius:10px"></div>
<div class="t" style="left:128.40px;top:248.15px;font-size:6.447px;color:#fff;font-weight:700;transform:scaleX(1.0532);transform-origin:0 0;">Entrar</div>
<div class="t" style="left:24.70px;top:267.82px;font-size:6.722px;color:#333;font-weight:400;transform:scaleX(1.0228);transform-origin:0 0;text-decoration:underline;text-decoration-color:#aaa;text-underline-offset:1px">Ainda não tem cadastro? Cadastre-se aqui</div>
<div class="t" style="left:194.10px;top:123.63px;font-size:10.562px;color:#2e2e2e;font-weight:400;transform:scaleX(0.9840);transform-origin:0 0;-webkit-text-stroke:0.32px #2e2e2e;">Para continuar</div>
<div class="t" style="left:194.10px;top:138.72px;font-size:6.722px;color:#9d9d9d;font-weight:400;">Para continuar, digite o número do seu CPF e</div>
<div class="t" style="left:194.10px;top:147.52px;font-size:6.722px;color:#9d9d9d;font-weight:400;">em seguida selecione o número que prefere</div>
<div class="t" style="left:194.10px;top:156.12px;font-size:6.722px;color:#9d9d9d;font-weight:400;">receber o código de verificação:</div>
<div class="a" style="left:194.50px;top:170.00px;width:140.00px;height:19.00px;background:#fff;border:1px solid #ececec;border-radius:2px"></div>
<div class="t" style="left:200.30px;top:176.07px;font-size:8.230px;color:#3a3a3a;font-weight:400;transform:scaleX(0.9009);transform-origin:0 0;">Digite sua linha</div>
<div class="a" style="left:193.80px;top:225.60px;width:60.00px;height:20.20px;background:#ffb9b9;border-radius:10px"></div>
<div class="t" style="left:208.50px;top:233.17px;font-size:7.270px;color:#ffdada;font-weight:700;transform:scaleX(0.8996);transform-origin:0 0;">Confirmar</div>
<div class="t" style="left:362.00px;top:123.63px;font-size:10.562px;color:#2e2e2e;font-weight:400;transform:scaleX(0.9840);transform-origin:0 0;-webkit-text-stroke:0.32px #2e2e2e;">Para continuar</div>
<div class="t" style="left:362.00px;top:138.72px;font-size:6.722px;color:#9d9d9d;font-weight:400;">Para continuar, digite o número do seu CPF e</div>
<div class="t" style="left:362.00px;top:147.52px;font-size:6.722px;color:#9d9d9d;font-weight:400;">em seguida selecione o número que prefere</div>
<div class="t" style="left:362.00px;top:156.12px;font-size:6.722px;color:#9d9d9d;font-weight:400;">receber o código de verificação:</div>
<div class="a" style="left:361.50px;top:170.00px;width:141.50px;height:19.00px;background:#fff;border:1px solid #ececec;border-radius:2px"></div>
<div class="t" style="left:367.30px;top:176.07px;font-size:8.230px;color:#3a3a3a;font-weight:400;transform:scaleX(0.8498);transform-origin:0 0;">(11) 98765-4321</div>
<div class="a" style="left:360.80px;top:225.60px;width:60.00px;height:20.20px;background:#ff1a00;border-radius:10px"></div>
<div class="t" style="left:375.50px;top:233.17px;font-size:7.270px;color:#fff;font-weight:700;transform:scaleX(0.8996);transform-origin:0 0;">Confirmar</div>
<div class="t" style="left:530.70px;top:124.59px;font-size:10.014px;color:#2e2e2e;font-weight:400;transform:scaleX(1.0386);transform-origin:0 0;-webkit-text-stroke:0.32px #2e2e2e;">Estamos quase terminando!</div>
<div class="t" style="left:530.70px;top:141.31px;font-size:6.859px;color:#9d9d9d;font-weight:400;transform:scaleX(0.9825);transform-origin:0 0;">Enviamos um código de verificação</div>
<div class="t" style="left:530.70px;top:150.11px;font-size:6.859px;color:#9d9d9d;font-weight:400;transform:scaleX(0.9734);transform-origin:0 0;">para o número (11) 98762-0987.</div>
<div class="t" style="left:530.70px;top:158.51px;font-size:6.859px;color:#9d9d9d;font-weight:400;transform:scaleX(0.9791);transform-origin:0 0;">Insira no campo abaixo.</div>
<div class="a" style="left:530.50px;top:172.10px;width:140.80px;height:19.10px;background:#fff;border:1px solid #ececec;border-radius:2px"></div>
<div class="t" style="left:537.10px;top:178.84px;font-size:7.545px;color:#2a2a2a;font-weight:700;transform:scaleX(0.8329);transform-origin:0 0;">Código de verificação</div>
<div class="a" style="left:530.50px;top:198.30px;width:59.40px;height:18.10px;background:#ff1a00;border-radius:10px"></div>
<div class="t" style="left:544.20px;top:203.38px;font-size:7.133px;color:#fff;font-weight:700;transform:scaleX(0.9271);transform-origin:0 0;">Confirmar</div>
<div class="a" style="left:530.50px;top:223.50px;width:76.40px;height:18.70px;background:#fff;border:1px solid #f0f0f0;border-radius:10px"></div>
<div class="t" style="left:544.20px;top:228.87px;font-size:7.270px;color:#c4c4c4;font-weight:400;transform:scaleX(0.9288);transform-origin:0 0;">Reenviar código</div>
<div class="t" style="left:530.50px;top:249.26px;font-size:5.350px;color:#8a8a8a;font-weight:400;transform:scaleX(0.9480);transform-origin:0 0;">Aguarde 27 segundos para reenviar o código</div>
<svg style="left:0;top:0" width="1" height="1"><g transform="translate(458.0,180.0)"><path d="M-6 0 H6 M0 -6 V0" stroke="#111" stroke-width="0.8"/><path d="M-6.5 0 L-4.5 -1.5 V1.5 Z M6.5 0 L4.5 -1.5 V1.5 Z M0 -6.5 L-1.5 -4.5 H1.5 Z" fill="#111"/><path d="M0 0 V12 L2.8 9.5 L4.8 14 L6.5 13.2 L4.5 8.8 L8.3 8.5 Z" fill="#fff" stroke="#222" stroke-width="0.8"/></g></svg>
<div class="a" style="left:586.00px;top:387.00px;width:4.00px;height:1.50px;background:#999"></div>
</div>
<div class="a" style="left:78.2px;top:412.9px;width:96.7px;height:54px;overflow:hidden;background:#fff"><div class="a" style="left:0;top:0;width:694px;height:390px;background:#fff;overflow:hidden;transform:scale(0.1393);transform-origin:0 0">
<svg style="left:0;top:0" width="694" height="390"><g fill="#f5f5f5"><path d="M18 0 H82.5 V390 H18 Z" opacity="0.8"/><path d="M315 40 L395 118 L330 240 L300 390 L250 390 L230 120 Z" opacity="0.5"/></g></svg>
<div class="a" style="left:120.40px;top:0.00px;width:451.60px;height:37.50px;background:#ff2a12;border-radius:0 0 22px 22px"></div>
<div class="a" style="left:335.70px;top:6.70px;width:4.40px;height:4.40px;background:#c40808;border-radius:50%"></div>
<div class="a" style="left:344.40px;top:6.70px;width:4.40px;height:4.40px;background:#c40808;border-radius:50%"></div>
<div class="a" style="left:353.50px;top:6.70px;width:4.40px;height:4.40px;background:#c40808;border-radius:50%"></div>
<div class="t" style="left:262.20px;top:18.17px;font-size:12.209px;color:#fff;font-weight:700;letter-spacing:1.5px">Login por OTP – Fase 1</div>
<div class="a" style="left:640.00px;top:18.00px;width:30.20px;height:30.60px;border-radius:50%;background:radial-gradient(ellipse 60% 30% at 50% 15%, #ff9a7a 0%, rgba(255,80,50,0) 100%),radial-gradient(ellipse 55% 30% at 50% 82%, #ff8c7a 0%, rgba(255,60,40,0) 100%),radial-gradient(circle at 50% 50%, #f01808 0%, #e81006 60%, #c00600 90%, #a00 100%)"></div>
<div class="t" style="left:641.80px;top:29.63px;font-size:8.642px;color:#fff;font-weight:700;transform:scaleX(0.9506);transform-origin:0 0;">Claro</div>
<svg style="left:0;top:0" width="1" height="1"><g stroke="#fff" stroke-width="1.07" stroke-linecap="butt"><path d="M660.49 27.81 V30.20"/><path d="M663.01 31.08 L665.53 28.69"/><path d="M664.02 33.44 H666.79"/></g></svg>
<div class="t" style="left:57.60px;top:64.31px;font-size:11.797px;color:#6a6a6a;font-weight:400;transform:scaleX(1.0555);transform-origin:0 0;">Habilitar o botão na tela de login</div>
<div class="a" style="left:17.70px;top:91.70px;width:155.50px;height:24.80px;background:#ff1a00"></div>
<div class="t" style="left:24.25px;top:100.06px;font-size:10.288px;color:#fff;font-weight:700;transform:scaleX(0.8556);transform-origin:0 0;">Claro</div>
<svg style="left:0;top:0" width="1" height="1"><g stroke="#fff" stroke-width="1.28" stroke-linecap="butt"><path d="M44.27 97.95 V100.80"/><path d="M46.98 101.85 L49.67 99.00"/><path d="M48.05 104.66 H51.02"/></g></svg>
<div class="a" style="left:17.70px;top:315.80px;width:155.50px;height:50.90px;background:#ff1a00"></div>
<div class="t" style="left:76.00px;top:329.37px;font-size:13.169px;color:#fff;font-weight:700;transform:scaleX(0.9655);transform-origin:0 0;">Claro</div>
<svg style="left:0;top:0" width="1" height="1"><g stroke="#fff" stroke-width="1.63" stroke-linecap="butt"><path d="M104.92 326.75 V330.40"/><path d="M108.83 331.74 L112.72 328.10"/><path d="M110.39 335.34 H114.67"/></g></svg>
<div class="t" style="left:44.95px;top:352.50px;font-size:4.938px;color:#fff;font-weight:700;transform:scaleX(0.9842);transform-origin:0 0;">© 2020 Claro. Todos os direitos reservados.</div>
<div class="a" style="left:188.00px;top:91.70px;width:153.50px;height:24.80px;background:#ff1a00"></div>
<div class="t" style="left:194.55px;top:100.06px;font-size:10.288px;color:#fff;font-weight:700;transform:scaleX(0.8556);transform-origin:0 0;">Claro</div>
<svg style="left:0;top:0" width="1" height="1"><g stroke="#fff" stroke-width="1.28" stroke-linecap="butt"><path d="M214.58 97.95 V100.80"/><path d="M217.28 101.85 L219.98 99.00"/><path d="M218.36 104.66 H221.33"/></g></svg>
<div class="a" style="left:188.00px;top:315.80px;width:153.50px;height:50.90px;background:#ff1a00"></div>
<div class="t" style="left:245.30px;top:329.37px;font-size:13.169px;color:#fff;font-weight:700;transform:scaleX(0.9655);transform-origin:0 0;">Claro</div>
<svg style="left:0;top:0" width="1" height="1"><g stroke="#fff" stroke-width="1.63" stroke-linecap="butt"><path d="M274.22 326.75 V330.40"/><path d="M278.12 331.74 L282.02 328.10"/><path d="M279.68 335.34 H283.97"/></g></svg>
<div class="t" style="left:214.25px;top:352.50px;font-size:4.938px;color:#fff;font-weight:700;transform:scaleX(0.9842);transform-origin:0 0;">© 2020 Claro. Todos os direitos reservados.</div>
<div class="a" style="left:356.00px;top:91.70px;width:153.60px;height:24.80px;background:#ff1a00"></div>
<div class="t" style="left:362.55px;top:100.06px;font-size:10.288px;color:#fff;font-weight:700;transform:scaleX(0.8556);transform-origin:0 0;">Claro</div>
<svg style="left:0;top:0" width="1" height="1"><g stroke="#fff" stroke-width="1.28" stroke-linecap="butt"><path d="M382.57 97.95 V100.80"/><path d="M385.27 101.85 L387.97 99.00"/><path d="M386.35 104.66 H389.32"/></g></svg>
<div class="a" style="left:356.00px;top:315.80px;width:153.60px;height:50.90px;background:#ff1a00"></div>
<div class="t" style="left:413.35px;top:329.37px;font-size:13.169px;color:#fff;font-weight:700;transform:scaleX(0.9655);transform-origin:0 0;">Claro</div>
<svg style="left:0;top:0" width="1" height="1"><g stroke="#fff" stroke-width="1.63" stroke-linecap="butt"><path d="M442.27 326.75 V330.40"/><path d="M446.17 331.74 L450.07 328.10"/><path d="M447.73 335.34 H452.02"/></g></svg>
<div class="t" style="left:382.30px;top:352.50px;font-size:4.938px;color:#fff;font-weight:700;transform:scaleX(0.9842);transform-origin:0 0;">© 2020 Claro. Todos os direitos reservados.</div>
<div class="a" style="left:524.00px;top:91.70px;width:153.70px;height:24.80px;background:#ff1a00"></div>
<div class="t" style="left:530.55px;top:100.06px;font-size:10.288px;color:#fff;font-weight:700;transform:scaleX(0.8556);transform-origin:0 0;">Claro</div>
<svg style="left:0;top:0" width="1" height="1"><g stroke="#fff" stroke-width="1.28" stroke-linecap="butt"><path d="M550.57 97.95 V100.80"/><path d="M553.27 101.85 L555.97 99.00"/><path d="M554.35 104.66 H557.32"/></g></svg>
<div class="a" style="left:524.00px;top:315.80px;width:153.70px;height:50.90px;background:#ff1a00"></div>
<div class="t" style="left:581.40px;top:329.37px;font-size:13.169px;color:#fff;font-weight:700;transform:scaleX(0.9655);transform-origin:0 0;">Claro</div>
<svg style="left:0;top:0" width="1" height="1"><g stroke="#fff" stroke-width="1.63" stroke-linecap="butt"><path d="M610.32 326.75 V330.40"/><path d="M614.23 331.74 L618.12 328.10"/><path d="M615.78 335.34 H620.07"/></g></svg>
<div class="t" style="left:550.35px;top:352.50px;font-size:4.938px;color:#fff;font-weight:700;transform:scaleX(0.9842);transform-origin:0 0;">© 2020 Claro. Todos os direitos reservados.</div>
<div class="t" style="left:24.70px;top:123.32px;font-size:10.700px;color:#2e2e2e;font-weight:400;transform:scaleX(0.9669);transform-origin:0 0;-webkit-text-stroke:0.32px #2e2e2e;">Olá! Bem-vindo</div>
<div class="t" style="left:24.70px;top:138.83px;font-size:6.584px;color:#9d9d9d;font-weight:400;transform:scaleX(1.0346);transform-origin:0 0;">Para fazer o seu login basta inserir seu CPF,</div>
<div class="t" style="left:24.70px;top:147.53px;font-size:6.584px;color:#9d9d9d;font-weight:400;transform:scaleX(1.04);transform-origin:0 0;">e-mail ou nome de usuário e a sua senha:</div>
<div class="a" style="left:24.50px;top:159.40px;width:141.20px;height:18.80px;background:#fff;border:1px solid #ececec;border-radius:2px"></div>
<div class="t" style="left:31.70px;top:166.36px;font-size:6.859px;color:#2a2a2a;font-weight:400;transform:scaleX(1.0054);transform-origin:0 0;">CPF, e-mail ou nome de usuário</div>
<div class="t" style="left:24.70px;top:185.25px;font-size:6.447px;color:#333;font-weight:400;transform:scaleX(1.0764);transform-origin:0 0;text-decoration:underline;text-decoration-color:#aaa;text-underline-offset:1px">Esqueci o e-mail</div>
<div class="a" style="left:24.50px;top:199.30px;width:141.20px;height:18.90px;background:#fff;border:1px solid #ececec;border-radius:2px"></div>
<div class="t" style="left:31.70px;top:206.01px;font-size:6.859px;color:#2a2a2a;font-weight:400;transform:scaleX(0.9580);transform-origin:0 0;">Senha</div>
<svg style="left:0;top:0" width="1" height="1"><path d="M149.8 208.7 Q154.0 204.2 158.2 208.7 Q154.0 213.2 149.8 208.7 Z" fill="none" stroke="#222" stroke-width="1"/><circle cx="154.0" cy="208.7" r="1.4" fill="#222"/></svg>
<div class="t" style="left:24.70px;top:224.95px;font-size:6.447px;color:#333;font-weight:400;transform:scaleX(1.0363);transform-origin:0 0;text-decoration:underline;text-decoration-color:#aaa;text-underline-offset:1px">Esqueci a senha</div>
<div class="a" style="left:24.50px;top:242.30px;width:79.90px;height:18.10px;background:#fff;border:1px solid #e6e6e6;border-radius:10px"></div>
<div class="t" style="left:38.75px;top:248.15px;font-size:6.447px;color:#222;font-weight:400;transform:scaleX(1.0590);transform-origin:0 0;">Login sem senha</div>
<div class="a" style="left:115.20px;top:242.50px;width:47.00px;height:17.90px;background:#ff1a00;border-radius:10px"></div>
<div class="t" style="left:128.40px;top:248.15px;font-size:6.447px;color:#fff;font-weight:700;transform:scaleX(1.0532);transform-origin:0 0;">Entrar</div>
<div class="t" style="left:24.70px;top:267.82px;font-size:6.722px;color:#333;font-weight:400;transform:scaleX(1.0228);transform-origin:0 0;text-decoration:underline;text-decoration-color:#aaa;text-underline-offset:1px">Ainda não tem cadastro? Cadastre-se aqui</div>
<div class="t" style="left:194.10px;top:123.63px;font-size:10.562px;color:#2e2e2e;font-weight:400;transform:scaleX(0.9840);transform-origin:0 0;-webkit-text-stroke:0.32px #2e2e2e;">Para continuar</div>
<div class="t" style="left:194.10px;top:138.72px;font-size:6.722px;color:#9d9d9d;font-weight:400;">Para continuar, digite o número do seu CPF e</div>
<div class="t" style="left:194.10px;top:147.52px;font-size:6.722px;color:#9d9d9d;font-weight:400;">em seguida selecione o número que prefere</div>
<div class="t" style="left:194.10px;top:156.12px;font-size:6.722px;color:#9d9d9d;font-weight:400;">receber o código de verificação:</div>
<div class="a" style="left:194.50px;top:170.00px;width:140.00px;height:19.00px;background:#fff;border:1px solid #ececec;border-radius:2px"></div>
<div class="t" style="left:200.30px;top:176.07px;font-size:8.230px;color:#3a3a3a;font-weight:400;transform:scaleX(0.9009);transform-origin:0 0;">Digite sua linha</div>
<div class="a" style="left:193.80px;top:225.60px;width:60.00px;height:20.20px;background:#ffb9b9;border-radius:10px"></div>
<div class="t" style="left:208.50px;top:233.17px;font-size:7.270px;color:#ffdada;font-weight:700;transform:scaleX(0.8996);transform-origin:0 0;">Confirmar</div>
<div class="t" style="left:362.00px;top:123.63px;font-size:10.562px;color:#2e2e2e;font-weight:400;transform:scaleX(0.9840);transform-origin:0 0;-webkit-text-stroke:0.32px #2e2e2e;">Para continuar</div>
<div class="t" style="left:362.00px;top:138.72px;font-size:6.722px;color:#9d9d9d;font-weight:400;">Para continuar, digite o número do seu CPF e</div>
<div class="t" style="left:362.00px;top:147.52px;font-size:6.722px;color:#9d9d9d;font-weight:400;">em seguida selecione o número que prefere</div>
<div class="t" style="left:362.00px;top:156.12px;font-size:6.722px;color:#9d9d9d;font-weight:400;">receber o código de verificação:</div>
<div class="a" style="left:361.50px;top:170.00px;width:141.50px;height:19.00px;background:#fff;border:1px solid #ececec;border-radius:2px"></div>
<div class="t" style="left:367.30px;top:176.07px;font-size:8.230px;color:#3a3a3a;font-weight:400;transform:scaleX(0.8498);transform-origin:0 0;">(11) 98765-4321</div>
<div class="a" style="left:360.80px;top:225.60px;width:60.00px;height:20.20px;background:#ff1a00;border-radius:10px"></div>
<div class="t" style="left:375.50px;top:233.17px;font-size:7.270px;color:#fff;font-weight:700;transform:scaleX(0.8996);transform-origin:0 0;">Confirmar</div>
<div class="t" style="left:530.70px;top:124.59px;font-size:10.014px;color:#2e2e2e;font-weight:400;transform:scaleX(1.0386);transform-origin:0 0;-webkit-text-stroke:0.32px #2e2e2e;">Estamos quase terminando!</div>
<div class="t" style="left:530.70px;top:141.31px;font-size:6.859px;color:#9d9d9d;font-weight:400;transform:scaleX(0.9825);transform-origin:0 0;">Enviamos um código de verificação</div>
<div class="t" style="left:530.70px;top:150.11px;font-size:6.859px;color:#9d9d9d;font-weight:400;transform:scaleX(0.9734);transform-origin:0 0;">para o número (11) 98762-0987.</div>
<div class="t" style="left:530.70px;top:158.51px;font-size:6.859px;color:#9d9d9d;font-weight:400;transform:scaleX(0.9791);transform-origin:0 0;">Insira no campo abaixo.</div>
<div class="a" style="left:530.50px;top:172.10px;width:140.80px;height:19.10px;background:#fff;border:1px solid #ececec;border-radius:2px"></div>
<div class="t" style="left:537.10px;top:178.84px;font-size:7.545px;color:#2a2a2a;font-weight:700;transform:scaleX(0.8329);transform-origin:0 0;">Código de verificação</div>
<div class="a" style="left:530.50px;top:198.30px;width:59.40px;height:18.10px;background:#ff1a00;border-radius:10px"></div>
<div class="t" style="left:544.20px;top:203.38px;font-size:7.133px;color:#fff;font-weight:700;transform:scaleX(0.9271);transform-origin:0 0;">Confirmar</div>
<div class="a" style="left:530.50px;top:223.50px;width:76.40px;height:18.70px;background:#fff;border:1px solid #f0f0f0;border-radius:10px"></div>
<div class="t" style="left:544.20px;top:228.87px;font-size:7.270px;color:#c4c4c4;font-weight:400;transform:scaleX(0.9288);transform-origin:0 0;">Reenviar código</div>
<div class="t" style="left:530.50px;top:249.26px;font-size:5.350px;color:#8a8a8a;font-weight:400;transform:scaleX(0.9480);transform-origin:0 0;">Aguarde 27 segundos para reenviar o código</div>
<svg style="left:0;top:0" width="1" height="1"><g transform="translate(458.0,180.0)"><path d="M-6 0 H6 M0 -6 V0" stroke="#111" stroke-width="0.8"/><path d="M-6.5 0 L-4.5 -1.5 V1.5 Z M6.5 0 L4.5 -1.5 V1.5 Z M0 -6.5 L-1.5 -4.5 H1.5 Z" fill="#111"/><path d="M0 0 V12 L2.8 9.5 L4.8 14 L6.5 13.2 L4.5 8.8 L8.3 8.5 Z" fill="#fff" stroke="#222" stroke-width="0.8"/></g></svg>
<div class="a" style="left:586.00px;top:387.00px;width:4.00px;height:1.50px;background:#999"></div>
<div class="a" style="left:519px;top:88px;width:175px;height:285px;background:#fff"></div></div></div>
<div class="a" style="left:78.2px;top:485.6px;width:96.7px;height:54px;overflow:hidden;background:#fff"><div class="a" style="left:0;top:0;width:694px;height:390px;background:#fff;overflow:hidden;transform:scale(0.1393);transform-origin:0 0">
<svg style="left:0;top:0" width="694" height="390"><g fill="#f5f5f5"><path d="M18 0 H82.5 V390 H18 Z" opacity="0.8"/><path d="M315 40 L395 118 L330 240 L300 390 L250 390 L230 120 Z" opacity="0.5"/></g></svg>
<div class="a" style="left:120.40px;top:0.00px;width:451.60px;height:37.50px;background:#ff2a12;border-radius:0 0 22px 22px"></div>
<div class="a" style="left:335.70px;top:6.70px;width:4.40px;height:4.40px;background:#c40808;border-radius:50%"></div>
<div class="a" style="left:344.40px;top:6.70px;width:4.40px;height:4.40px;background:#c40808;border-radius:50%"></div>
<div class="a" style="left:353.50px;top:6.70px;width:4.40px;height:4.40px;background:#c40808;border-radius:50%"></div>
<div class="t" style="left:262.20px;top:18.17px;font-size:12.209px;color:#fff;font-weight:700;letter-spacing:1.5px">Login por OTP – Fase 1</div>
<div class="a" style="left:640.00px;top:18.00px;width:30.20px;height:30.60px;border-radius:50%;background:radial-gradient(ellipse 60% 30% at 50% 15%, #ff9a7a 0%, rgba(255,80,50,0) 100%),radial-gradient(ellipse 55% 30% at 50% 82%, #ff8c7a 0%, rgba(255,60,40,0) 100%),radial-gradient(circle at 50% 50%, #f01808 0%, #e81006 60%, #c00600 90%, #a00 100%)"></div>
<div class="t" style="left:641.80px;top:29.63px;font-size:8.642px;color:#fff;font-weight:700;transform:scaleX(0.9506);transform-origin:0 0;">Claro</div>
<svg style="left:0;top:0" width="1" height="1"><g stroke="#fff" stroke-width="1.07" stroke-linecap="butt"><path d="M660.49 27.81 V30.20"/><path d="M663.01 31.08 L665.53 28.69"/><path d="M664.02 33.44 H666.79"/></g></svg>
<div class="t" style="left:57.60px;top:64.31px;font-size:11.797px;color:#6a6a6a;font-weight:400;transform:scaleX(1.0555);transform-origin:0 0;">Habilitar o botão na tela de login</div>
<div class="a" style="left:17.70px;top:91.70px;width:155.50px;height:24.80px;background:#ff1a00"></div>
<div class="t" style="left:24.25px;top:100.06px;font-size:10.288px;color:#fff;font-weight:700;transform:scaleX(0.8556);transform-origin:0 0;">Claro</div>
<svg style="left:0;top:0" width="1" height="1"><g stroke="#fff" stroke-width="1.28" stroke-linecap="butt"><path d="M44.27 97.95 V100.80"/><path d="M46.98 101.85 L49.67 99.00"/><path d="M48.05 104.66 H51.02"/></g></svg>
<div class="a" style="left:17.70px;top:315.80px;width:155.50px;height:50.90px;background:#ff1a00"></div>
<div class="t" style="left:76.00px;top:329.37px;font-size:13.169px;color:#fff;font-weight:700;transform:scaleX(0.9655);transform-origin:0 0;">Claro</div>
<svg style="left:0;top:0" width="1" height="1"><g stroke="#fff" stroke-width="1.63" stroke-linecap="butt"><path d="M104.92 326.75 V330.40"/><path d="M108.83 331.74 L112.72 328.10"/><path d="M110.39 335.34 H114.67"/></g></svg>
<div class="t" style="left:44.95px;top:352.50px;font-size:4.938px;color:#fff;font-weight:700;transform:scaleX(0.9842);transform-origin:0 0;">© 2020 Claro. Todos os direitos reservados.</div>
<div class="a" style="left:188.00px;top:91.70px;width:153.50px;height:24.80px;background:#ff1a00"></div>
<div class="t" style="left:194.55px;top:100.06px;font-size:10.288px;color:#fff;font-weight:700;transform:scaleX(0.8556);transform-origin:0 0;">Claro</div>
<svg style="left:0;top:0" width="1" height="1"><g stroke="#fff" stroke-width="1.28" stroke-linecap="butt"><path d="M214.58 97.95 V100.80"/><path d="M217.28 101.85 L219.98 99.00"/><path d="M218.36 104.66 H221.33"/></g></svg>
<div class="a" style="left:188.00px;top:315.80px;width:153.50px;height:50.90px;background:#ff1a00"></div>
<div class="t" style="left:245.30px;top:329.37px;font-size:13.169px;color:#fff;font-weight:700;transform:scaleX(0.9655);transform-origin:0 0;">Claro</div>
<svg style="left:0;top:0" width="1" height="1"><g stroke="#fff" stroke-width="1.63" stroke-linecap="butt"><path d="M274.22 326.75 V330.40"/><path d="M278.12 331.74 L282.02 328.10"/><path d="M279.68 335.34 H283.97"/></g></svg>
<div class="t" style="left:214.25px;top:352.50px;font-size:4.938px;color:#fff;font-weight:700;transform:scaleX(0.9842);transform-origin:0 0;">© 2020 Claro. Todos os direitos reservados.</div>
<div class="a" style="left:356.00px;top:91.70px;width:153.60px;height:24.80px;background:#ff1a00"></div>
<div class="t" style="left:362.55px;top:100.06px;font-size:10.288px;color:#fff;font-weight:700;transform:scaleX(0.8556);transform-origin:0 0;">Claro</div>
<svg style="left:0;top:0" width="1" height="1"><g stroke="#fff" stroke-width="1.28" stroke-linecap="butt"><path d="M382.57 97.95 V100.80"/><path d="M385.27 101.85 L387.97 99.00"/><path d="M386.35 104.66 H389.32"/></g></svg>
<div class="a" style="left:356.00px;top:315.80px;width:153.60px;height:50.90px;background:#ff1a00"></div>
<div class="t" style="left:413.35px;top:329.37px;font-size:13.169px;color:#fff;font-weight:700;transform:scaleX(0.9655);transform-origin:0 0;">Claro</div>
<svg style="left:0;top:0" width="1" height="1"><g stroke="#fff" stroke-width="1.63" stroke-linecap="butt"><path d="M442.27 326.75 V330.40"/><path d="M446.17 331.74 L450.07 328.10"/><path d="M447.73 335.34 H452.02"/></g></svg>
<div class="t" style="left:382.30px;top:352.50px;font-size:4.938px;color:#fff;font-weight:700;transform:scaleX(0.9842);transform-origin:0 0;">© 2020 Claro. Todos os direitos reservados.</div>
<div class="a" style="left:524.00px;top:91.70px;width:153.70px;height:24.80px;background:#ff1a00"></div>
<div class="t" style="left:530.55px;top:100.06px;font-size:10.288px;color:#fff;font-weight:700;transform:scaleX(0.8556);transform-origin:0 0;">Claro</div>
<svg style="left:0;top:0" width="1" height="1"><g stroke="#fff" stroke-width="1.28" stroke-linecap="butt"><path d="M550.57 97.95 V100.80"/><path d="M553.27 101.85 L555.97 99.00"/><path d="M554.35 104.66 H557.32"/></g></svg>
<div class="a" style="left:524.00px;top:315.80px;width:153.70px;height:50.90px;background:#ff1a00"></div>
<div class="t" style="left:581.40px;top:329.37px;font-size:13.169px;color:#fff;font-weight:700;transform:scaleX(0.9655);transform-origin:0 0;">Claro</div>
<svg style="left:0;top:0" width="1" height="1"><g stroke="#fff" stroke-width="1.63" stroke-linecap="butt"><path d="M610.32 326.75 V330.40"/><path d="M614.23 331.74 L618.12 328.10"/><path d="M615.78 335.34 H620.07"/></g></svg>
<div class="t" style="left:550.35px;top:352.50px;font-size:4.938px;color:#fff;font-weight:700;transform:scaleX(0.9842);transform-origin:0 0;">© 2020 Claro. Todos os direitos reservados.</div>
<div class="t" style="left:24.70px;top:123.32px;font-size:10.700px;color:#2e2e2e;font-weight:400;transform:scaleX(0.9669);transform-origin:0 0;-webkit-text-stroke:0.32px #2e2e2e;">Olá! Bem-vindo</div>
<div class="t" style="left:24.70px;top:138.83px;font-size:6.584px;color:#9d9d9d;font-weight:400;transform:scaleX(1.0346);transform-origin:0 0;">Para fazer o seu login basta inserir seu CPF,</div>
<div class="t" style="left:24.70px;top:147.53px;font-size:6.584px;color:#9d9d9d;font-weight:400;transform:scaleX(1.04);transform-origin:0 0;">e-mail ou nome de usuário e a sua senha:</div>
<div class="a" style="left:24.50px;top:159.40px;width:141.20px;height:18.80px;background:#fff;border:1px solid #ececec;border-radius:2px"></div>
<div class="t" style="left:31.70px;top:166.36px;font-size:6.859px;color:#2a2a2a;font-weight:400;transform:scaleX(1.0054);transform-origin:0 0;">CPF, e-mail ou nome de usuário</div>
<div class="t" style="left:24.70px;top:185.25px;font-size:6.447px;color:#333;font-weight:400;transform:scaleX(1.0764);transform-origin:0 0;text-decoration:underline;text-decoration-color:#aaa;text-underline-offset:1px">Esqueci o e-mail</div>
<div class="a" style="left:24.50px;top:199.30px;width:141.20px;height:18.90px;background:#fff;border:1px solid #ececec;border-radius:2px"></div>
<div class="t" style="left:31.70px;top:206.01px;font-size:6.859px;color:#2a2a2a;font-weight:400;transform:scaleX(0.9580);transform-origin:0 0;">Senha</div>
<svg style="left:0;top:0" width="1" height="1"><path d="M149.8 208.7 Q154.0 204.2 158.2 208.7 Q154.0 213.2 149.8 208.7 Z" fill="none" stroke="#222" stroke-width="1"/><circle cx="154.0" cy="208.7" r="1.4" fill="#222"/></svg>
<div class="t" style="left:24.70px;top:224.95px;font-size:6.447px;color:#333;font-weight:400;transform:scaleX(1.0363);transform-origin:0 0;text-decoration:underline;text-decoration-color:#aaa;text-underline-offset:1px">Esqueci a senha</div>
<div class="a" style="left:24.50px;top:242.30px;width:79.90px;height:18.10px;background:#fff;border:1px solid #e6e6e6;border-radius:10px"></div>
<div class="t" style="left:38.75px;top:248.15px;font-size:6.447px;color:#222;font-weight:400;transform:scaleX(1.0590);transform-origin:0 0;">Login sem senha</div>
<div class="a" style="left:115.20px;top:242.50px;width:47.00px;height:17.90px;background:#ff1a00;border-radius:10px"></div>
<div class="t" style="left:128.40px;top:248.15px;font-size:6.447px;color:#fff;font-weight:700;transform:scaleX(1.0532);transform-origin:0 0;">Entrar</div>
<div class="t" style="left:24.70px;top:267.82px;font-size:6.722px;color:#333;font-weight:400;transform:scaleX(1.0228);transform-origin:0 0;text-decoration:underline;text-decoration-color:#aaa;text-underline-offset:1px">Ainda não tem cadastro? Cadastre-se aqui</div>
<div class="t" style="left:194.10px;top:123.63px;font-size:10.562px;color:#2e2e2e;font-weight:400;transform:scaleX(0.9840);transform-origin:0 0;-webkit-text-stroke:0.32px #2e2e2e;">Para continuar</div>
<div class="t" style="left:194.10px;top:138.72px;font-size:6.722px;color:#9d9d9d;font-weight:400;">Para continuar, digite o número do seu CPF e</div>
<div class="t" style="left:194.10px;top:147.52px;font-size:6.722px;color:#9d9d9d;font-weight:400;">em seguida selecione o número que prefere</div>
<div class="t" style="left:194.10px;top:156.12px;font-size:6.722px;color:#9d9d9d;font-weight:400;">receber o código de verificação:</div>
<div class="a" style="left:194.50px;top:170.00px;width:140.00px;height:19.00px;background:#fff;border:1px solid #ececec;border-radius:2px"></div>
<div class="t" style="left:200.30px;top:176.07px;font-size:8.230px;color:#3a3a3a;font-weight:400;transform:scaleX(0.9009);transform-origin:0 0;">Digite sua linha</div>
<div class="a" style="left:193.80px;top:225.60px;width:60.00px;height:20.20px;background:#ffb9b9;border-radius:10px"></div>
<div class="t" style="left:208.50px;top:233.17px;font-size:7.270px;color:#ffdada;font-weight:700;transform:scaleX(0.8996);transform-origin:0 0;">Confirmar</div>
<div class="t" style="left:362.00px;top:123.63px;font-size:10.562px;color:#2e2e2e;font-weight:400;transform:scaleX(0.9840);transform-origin:0 0;-webkit-text-stroke:0.32px #2e2e2e;">Para continuar</div>
<div class="t" style="left:362.00px;top:138.72px;font-size:6.722px;color:#9d9d9d;font-weight:400;">Para continuar, digite o número do seu CPF e</div>
<div class="t" style="left:362.00px;top:147.52px;font-size:6.722px;color:#9d9d9d;font-weight:400;">em seguida selecione o número que prefere</div>
<div class="t" style="left:362.00px;top:156.12px;font-size:6.722px;color:#9d9d9d;font-weight:400;">receber o código de verificação:</div>
<div class="a" style="left:361.50px;top:170.00px;width:141.50px;height:19.00px;background:#fff;border:1px solid #ececec;border-radius:2px"></div>
<div class="t" style="left:367.30px;top:176.07px;font-size:8.230px;color:#3a3a3a;font-weight:400;transform:scaleX(0.8498);transform-origin:0 0;">(11) 98765-4321</div>
<div class="a" style="left:360.80px;top:225.60px;width:60.00px;height:20.20px;background:#ff1a00;border-radius:10px"></div>
<div class="t" style="left:375.50px;top:233.17px;font-size:7.270px;color:#fff;font-weight:700;transform:scaleX(0.8996);transform-origin:0 0;">Confirmar</div>
<div class="t" style="left:530.70px;top:124.59px;font-size:10.014px;color:#2e2e2e;font-weight:400;transform:scaleX(1.0386);transform-origin:0 0;-webkit-text-stroke:0.32px #2e2e2e;">Estamos quase terminando!</div>
<div class="t" style="left:530.70px;top:141.31px;font-size:6.859px;color:#9d9d9d;font-weight:400;transform:scaleX(0.9825);transform-origin:0 0;">Enviamos um código de verificação</div>
<div class="t" style="left:530.70px;top:150.11px;font-size:6.859px;color:#9d9d9d;font-weight:400;transform:scaleX(0.9734);transform-origin:0 0;">para o número (11) 98762-0987.</div>
<div class="t" style="left:530.70px;top:158.51px;font-size:6.859px;color:#9d9d9d;font-weight:400;transform:scaleX(0.9791);transform-origin:0 0;">Insira no campo abaixo.</div>
<div class="a" style="left:530.50px;top:172.10px;width:140.80px;height:19.10px;background:#fff;border:1px solid #ececec;border-radius:2px"></div>
<div class="t" style="left:537.10px;top:178.84px;font-size:7.545px;color:#2a2a2a;font-weight:700;transform:scaleX(0.8329);transform-origin:0 0;">Código de verificação</div>
<div class="a" style="left:530.50px;top:198.30px;width:59.40px;height:18.10px;background:#ff1a00;border-radius:10px"></div>
<div class="t" style="left:544.20px;top:203.38px;font-size:7.133px;color:#fff;font-weight:700;transform:scaleX(0.9271);transform-origin:0 0;">Confirmar</div>
<div class="a" style="left:530.50px;top:223.50px;width:76.40px;height:18.70px;background:#fff;border:1px solid #f0f0f0;border-radius:10px"></div>
<div class="t" style="left:544.20px;top:228.87px;font-size:7.270px;color:#c4c4c4;font-weight:400;transform:scaleX(0.9288);transform-origin:0 0;">Reenviar código</div>
<div class="t" style="left:530.50px;top:249.26px;font-size:5.350px;color:#8a8a8a;font-weight:400;transform:scaleX(0.9480);transform-origin:0 0;">Aguarde 27 segundos para reenviar o código</div>
<svg style="left:0;top:0" width="1" height="1"><g transform="translate(458.0,180.0)"><path d="M-6 0 H6 M0 -6 V0" stroke="#111" stroke-width="0.8"/><path d="M-6.5 0 L-4.5 -1.5 V1.5 Z M6.5 0 L4.5 -1.5 V1.5 Z M0 -6.5 L-1.5 -4.5 H1.5 Z" fill="#111"/><path d="M0 0 V12 L2.8 9.5 L4.8 14 L6.5 13.2 L4.5 8.8 L8.3 8.5 Z" fill="#fff" stroke="#222" stroke-width="0.8"/></g></svg>
<div class="a" style="left:586.00px;top:387.00px;width:4.00px;height:1.50px;background:#999"></div>
<div class="a" style="left:349px;top:88px;width:345px;height:285px;background:#fff"></div></div></div>
<div class="a" style="left:78.2px;top:557.6px;width:96.7px;height:27.4px;overflow:hidden;background:#fff"><div class="a" style="left:0;top:0;width:694px;height:390px;background:#fff;overflow:hidden;transform:scale(0.1393);transform-origin:0 0">
<svg style="left:0;top:0" width="694" height="390"><g fill="#f5f5f5"><path d="M18 0 H82.5 V390 H18 Z" opacity="0.8"/><path d="M315 40 L395 118 L330 240 L300 390 L250 390 L230 120 Z" opacity="0.5"/></g></svg>
<div class="a" style="left:120.40px;top:0.00px;width:451.60px;height:37.50px;background:#ff2a12;border-radius:0 0 22px 22px"></div>
<div class="a" style="left:335.70px;top:6.70px;width:4.40px;height:4.40px;background:#c40808;border-radius:50%"></div>
<div class="a" style="left:344.40px;top:6.70px;width:4.40px;height:4.40px;background:#c40808;border-radius:50%"></div>
<div class="a" style="left:353.50px;top:6.70px;width:4.40px;height:4.40px;background:#c40808;border-radius:50%"></div>
<div class="t" style="left:262.20px;top:18.17px;font-size:12.209px;color:#fff;font-weight:700;letter-spacing:1.5px">Login por OTP – Fase 1</div>
<div class="a" style="left:640.00px;top:18.00px;width:30.20px;height:30.60px;border-radius:50%;background:radial-gradient(ellipse 60% 30% at 50% 15%, #ff9a7a 0%, rgba(255,80,50,0) 100%),radial-gradient(ellipse 55% 30% at 50% 82%, #ff8c7a 0%, rgba(255,60,40,0) 100%),radial-gradient(circle at 50% 50%, #f01808 0%, #e81006 60%, #c00600 90%, #a00 100%)"></div>
<div class="t" style="left:641.80px;top:29.63px;font-size:8.642px;color:#fff;font-weight:700;transform:scaleX(0.9506);transform-origin:0 0;">Claro</div>
<svg style="left:0;top:0" width="1" height="1"><g stroke="#fff" stroke-width="1.07" stroke-linecap="butt"><path d="M660.49 27.81 V30.20"/><path d="M663.01 31.08 L665.53 28.69"/><path d="M664.02 33.44 H666.79"/></g></svg>
<div class="t" style="left:57.60px;top:64.31px;font-size:11.797px;color:#6a6a6a;font-weight:400;transform:scaleX(1.0555);transform-origin:0 0;">Habilitar o botão na tela de login</div>
<div class="a" style="left:17.70px;top:91.70px;width:155.50px;height:24.80px;background:#ff1a00"></div>
<div class="t" style="left:24.25px;top:100.06px;font-size:10.288px;color:#fff;font-weight:700;transform:scaleX(0.8556);transform-origin:0 0;">Claro</div>
<svg style="left:0;top:0" width="1" height="1"><g stroke="#fff" stroke-width="1.28" stroke-linecap="butt"><path d="M44.27 97.95 V100.80"/><path d="M46.98 101.85 L49.67 99.00"/><path d="M48.05 104.66 H51.02"/></g></svg>
<div class="a" style="left:17.70px;top:315.80px;width:155.50px;height:50.90px;background:#ff1a00"></div>
<div class="t" style="left:76.00px;top:329.37px;font-size:13.169px;color:#fff;font-weight:700;transform:scaleX(0.9655);transform-origin:0 0;">Claro</div>
<svg style="left:0;top:0" width="1" height="1"><g stroke="#fff" stroke-width="1.63" stroke-linecap="butt"><path d="M104.92 326.75 V330.40"/><path d="M108.83 331.74 L112.72 328.10"/><path d="M110.39 335.34 H114.67"/></g></svg>
<div class="t" style="left:44.95px;top:352.50px;font-size:4.938px;color:#fff;font-weight:700;transform:scaleX(0.9842);transform-origin:0 0;">© 2020 Claro. Todos os direitos reservados.</div>
<div class="a" style="left:188.00px;top:91.70px;width:153.50px;height:24.80px;background:#ff1a00"></div>
<div class="t" style="left:194.55px;top:100.06px;font-size:10.288px;color:#fff;font-weight:700;transform:scaleX(0.8556);transform-origin:0 0;">Claro</div>
<svg style="left:0;top:0" width="1" height="1"><g stroke="#fff" stroke-width="1.28" stroke-linecap="butt"><path d="M214.58 97.95 V100.80"/><path d="M217.28 101.85 L219.98 99.00"/><path d="M218.36 104.66 H221.33"/></g></svg>
<div class="a" style="left:188.00px;top:315.80px;width:153.50px;height:50.90px;background:#ff1a00"></div>
<div class="t" style="left:245.30px;top:329.37px;font-size:13.169px;color:#fff;font-weight:700;transform:scaleX(0.9655);transform-origin:0 0;">Claro</div>
<svg style="left:0;top:0" width="1" height="1"><g stroke="#fff" stroke-width="1.63" stroke-linecap="butt"><path d="M274.22 326.75 V330.40"/><path d="M278.12 331.74 L282.02 328.10"/><path d="M279.68 335.34 H283.97"/></g></svg>
<div class="t" style="left:214.25px;top:352.50px;font-size:4.938px;color:#fff;font-weight:700;transform:scaleX(0.9842);transform-origin:0 0;">© 2020 Claro. Todos os direitos reservados.</div>
<div class="a" style="left:356.00px;top:91.70px;width:153.60px;height:24.80px;background:#ff1a00"></div>
<div class="t" style="left:362.55px;top:100.06px;font-size:10.288px;color:#fff;font-weight:700;transform:scaleX(0.8556);transform-origin:0 0;">Claro</div>
<svg style="left:0;top:0" width="1" height="1"><g stroke="#fff" stroke-width="1.28" stroke-linecap="butt"><path d="M382.57 97.95 V100.80"/><path d="M385.27 101.85 L387.97 99.00"/><path d="M386.35 104.66 H389.32"/></g></svg>
<div class="a" style="left:356.00px;top:315.80px;width:153.60px;height:50.90px;background:#ff1a00"></div>
<div class="t" style="left:413.35px;top:329.37px;font-size:13.169px;color:#fff;font-weight:700;transform:scaleX(0.9655);transform-origin:0 0;">Claro</div>
<svg style="left:0;top:0" width="1" height="1"><g stroke="#fff" stroke-width="1.63" stroke-linecap="butt"><path d="M442.27 326.75 V330.40"/><path d="M446.17 331.74 L450.07 328.10"/><path d="M447.73 335.34 H452.02"/></g></svg>
<div class="t" style="left:382.30px;top:352.50px;font-size:4.938px;color:#fff;font-weight:700;transform:scaleX(0.9842);transform-origin:0 0;">© 2020 Claro. Todos os direitos reservados.</div>
<div class="a" style="left:524.00px;top:91.70px;width:153.70px;height:24.80px;background:#ff1a00"></div>
<div class="t" style="left:530.55px;top:100.06px;font-size:10.288px;color:#fff;font-weight:700;transform:scaleX(0.8556);transform-origin:0 0;">Claro</div>
<svg style="left:0;top:0" width="1" height="1"><g stroke="#fff" stroke-width="1.28" stroke-linecap="butt"><path d="M550.57 97.95 V100.80"/><path d="M553.27 101.85 L555.97 99.00"/><path d="M554.35 104.66 H557.32"/></g></svg>
<div class="a" style="left:524.00px;top:315.80px;width:153.70px;height:50.90px;background:#ff1a00"></div>
<div class="t" style="left:581.40px;top:329.37px;font-size:13.169px;color:#fff;font-weight:700;transform:scaleX(0.9655);transform-origin:0 0;">Claro</div>
<svg style="left:0;top:0" width="1" height="1"><g stroke="#fff" stroke-width="1.63" stroke-linecap="butt"><path d="M610.32 326.75 V330.40"/><path d="M614.23 331.74 L618.12 328.10"/><path d="M615.78 335.34 H620.07"/></g></svg>
<div class="t" style="left:550.35px;top:352.50px;font-size:4.938px;color:#fff;font-weight:700;transform:scaleX(0.9842);transform-origin:0 0;">© 2020 Claro. Todos os direitos reservados.</div>
<div class="t" style="left:24.70px;top:123.32px;font-size:10.700px;color:#2e2e2e;font-weight:400;transform:scaleX(0.9669);transform-origin:0 0;-webkit-text-stroke:0.32px #2e2e2e;">Olá! Bem-vindo</div>
<div class="t" style="left:24.70px;top:138.83px;font-size:6.584px;color:#9d9d9d;font-weight:400;transform:scaleX(1.0346);transform-origin:0 0;">Para fazer o seu login basta inserir seu CPF,</div>
<div class="t" style="left:24.70px;top:147.53px;font-size:6.584px;color:#9d9d9d;font-weight:400;transform:scaleX(1.04);transform-origin:0 0;">e-mail ou nome de usuário e a sua senha:</div>
<div class="a" style="left:24.50px;top:159.40px;width:141.20px;height:18.80px;background:#fff;border:1px solid #ececec;border-radius:2px"></div>
<div class="t" style="left:31.70px;top:166.36px;font-size:6.859px;color:#2a2a2a;font-weight:400;transform:scaleX(1.0054);transform-origin:0 0;">CPF, e-mail ou nome de usuário</div>
<div class="t" style="left:24.70px;top:185.25px;font-size:6.447px;color:#333;font-weight:400;transform:scaleX(1.0764);transform-origin:0 0;text-decoration:underline;text-decoration-color:#aaa;text-underline-offset:1px">Esqueci o e-mail</div>
<div class="a" style="left:24.50px;top:199.30px;width:141.20px;height:18.90px;background:#fff;border:1px solid #ececec;border-radius:2px"></div>
<div class="t" style="left:31.70px;top:206.01px;font-size:6.859px;color:#2a2a2a;font-weight:400;transform:scaleX(0.9580);transform-origin:0 0;">Senha</div>
<svg style="left:0;top:0" width="1" height="1"><path d="M149.8 208.7 Q154.0 204.2 158.2 208.7 Q154.0 213.2 149.8 208.7 Z" fill="none" stroke="#222" stroke-width="1"/><circle cx="154.0" cy="208.7" r="1.4" fill="#222"/></svg>
<div class="t" style="left:24.70px;top:224.95px;font-size:6.447px;color:#333;font-weight:400;transform:scaleX(1.0363);transform-origin:0 0;text-decoration:underline;text-decoration-color:#aaa;text-underline-offset:1px">Esqueci a senha</div>
<div class="a" style="left:24.50px;top:242.30px;width:79.90px;height:18.10px;background:#fff;border:1px solid #e6e6e6;border-radius:10px"></div>
<div class="t" style="left:38.75px;top:248.15px;font-size:6.447px;color:#222;font-weight:400;transform:scaleX(1.0590);transform-origin:0 0;">Login sem senha</div>
<div class="a" style="left:115.20px;top:242.50px;width:47.00px;height:17.90px;background:#ff1a00;border-radius:10px"></div>
<div class="t" style="left:128.40px;top:248.15px;font-size:6.447px;color:#fff;font-weight:700;transform:scaleX(1.0532);transform-origin:0 0;">Entrar</div>
<div class="t" style="left:24.70px;top:267.82px;font-size:6.722px;color:#333;font-weight:400;transform:scaleX(1.0228);transform-origin:0 0;text-decoration:underline;text-decoration-color:#aaa;text-underline-offset:1px">Ainda não tem cadastro? Cadastre-se aqui</div>
<div class="t" style="left:194.10px;top:123.63px;font-size:10.562px;color:#2e2e2e;font-weight:400;transform:scaleX(0.9840);transform-origin:0 0;-webkit-text-stroke:0.32px #2e2e2e;">Para continuar</div>
<div class="t" style="left:194.10px;top:138.72px;font-size:6.722px;color:#9d9d9d;font-weight:400;">Para continuar, digite o número do seu CPF e</div>
<div class="t" style="left:194.10px;top:147.52px;font-size:6.722px;color:#9d9d9d;font-weight:400;">em seguida selecione o número que prefere</div>
<div class="t" style="left:194.10px;top:156.12px;font-size:6.722px;color:#9d9d9d;font-weight:400;">receber o código de verificação:</div>
<div class="a" style="left:194.50px;top:170.00px;width:140.00px;height:19.00px;background:#fff;border:1px solid #ececec;border-radius:2px"></div>
<div class="t" style="left:200.30px;top:176.07px;font-size:8.230px;color:#3a3a3a;font-weight:400;transform:scaleX(0.9009);transform-origin:0 0;">Digite sua linha</div>
<div class="a" style="left:193.80px;top:225.60px;width:60.00px;height:20.20px;background:#ffb9b9;border-radius:10px"></div>
<div class="t" style="left:208.50px;top:233.17px;font-size:7.270px;color:#ffdada;font-weight:700;transform:scaleX(0.8996);transform-origin:0 0;">Confirmar</div>
<div class="t" style="left:362.00px;top:123.63px;font-size:10.562px;color:#2e2e2e;font-weight:400;transform:scaleX(0.9840);transform-origin:0 0;-webkit-text-stroke:0.32px #2e2e2e;">Para continuar</div>
<div class="t" style="left:362.00px;top:138.72px;font-size:6.722px;color:#9d9d9d;font-weight:400;">Para continuar, digite o número do seu CPF e</div>
<div class="t" style="left:362.00px;top:147.52px;font-size:6.722px;color:#9d9d9d;font-weight:400;">em seguida selecione o número que prefere</div>
<div class="t" style="left:362.00px;top:156.12px;font-size:6.722px;color:#9d9d9d;font-weight:400;">receber o código de verificação:</div>
<div class="a" style="left:361.50px;top:170.00px;width:141.50px;height:19.00px;background:#fff;border:1px solid #ececec;border-radius:2px"></div>
<div class="t" style="left:367.30px;top:176.07px;font-size:8.230px;color:#3a3a3a;font-weight:400;transform:scaleX(0.8498);transform-origin:0 0;">(11) 98765-4321</div>
<div class="a" style="left:360.80px;top:225.60px;width:60.00px;height:20.20px;background:#ff1a00;border-radius:10px"></div>
<div class="t" style="left:375.50px;top:233.17px;font-size:7.270px;color:#fff;font-weight:700;transform:scaleX(0.8996);transform-origin:0 0;">Confirmar</div>
<div class="t" style="left:530.70px;top:124.59px;font-size:10.014px;color:#2e2e2e;font-weight:400;transform:scaleX(1.0386);transform-origin:0 0;-webkit-text-stroke:0.32px #2e2e2e;">Estamos quase terminando!</div>
<div class="t" style="left:530.70px;top:141.31px;font-size:6.859px;color:#9d9d9d;font-weight:400;transform:scaleX(0.9825);transform-origin:0 0;">Enviamos um código de verificação</div>
<div class="t" style="left:530.70px;top:150.11px;font-size:6.859px;color:#9d9d9d;font-weight:400;transform:scaleX(0.9734);transform-origin:0 0;">para o número (11) 98762-0987.</div>
<div class="t" style="left:530.70px;top:158.51px;font-size:6.859px;color:#9d9d9d;font-weight:400;transform:scaleX(0.9791);transform-origin:0 0;">Insira no campo abaixo.</div>
<div class="a" style="left:530.50px;top:172.10px;width:140.80px;height:19.10px;background:#fff;border:1px solid #ececec;border-radius:2px"></div>
<div class="t" style="left:537.10px;top:178.84px;font-size:7.545px;color:#2a2a2a;font-weight:700;transform:scaleX(0.8329);transform-origin:0 0;">Código de verificação</div>
<div class="a" style="left:530.50px;top:198.30px;width:59.40px;height:18.10px;background:#ff1a00;border-radius:10px"></div>
<div class="t" style="left:544.20px;top:203.38px;font-size:7.133px;color:#fff;font-weight:700;transform:scaleX(0.9271);transform-origin:0 0;">Confirmar</div>
<div class="a" style="left:530.50px;top:223.50px;width:76.40px;height:18.70px;background:#fff;border:1px solid #f0f0f0;border-radius:10px"></div>
<div class="t" style="left:544.20px;top:228.87px;font-size:7.270px;color:#c4c4c4;font-weight:400;transform:scaleX(0.9288);transform-origin:0 0;">Reenviar código</div>
<div class="t" style="left:530.50px;top:249.26px;font-size:5.350px;color:#8a8a8a;font-weight:400;transform:scaleX(0.9480);transform-origin:0 0;">Aguarde 27 segundos para reenviar o código</div>
<svg style="left:0;top:0" width="1" height="1"><g transform="translate(458.0,180.0)"><path d="M-6 0 H6 M0 -6 V0" stroke="#111" stroke-width="0.8"/><path d="M-6.5 0 L-4.5 -1.5 V1.5 Z M6.5 0 L4.5 -1.5 V1.5 Z M0 -6.5 L-1.5 -4.5 H1.5 Z" fill="#111"/><path d="M0 0 V12 L2.8 9.5 L4.8 14 L6.5 13.2 L4.5 8.8 L8.3 8.5 Z" fill="#fff" stroke="#222" stroke-width="0.8"/></g></svg>
<div class="a" style="left:586.00px;top:387.00px;width:4.00px;height:1.50px;background:#999"></div>
</div></div>


</body></html>
